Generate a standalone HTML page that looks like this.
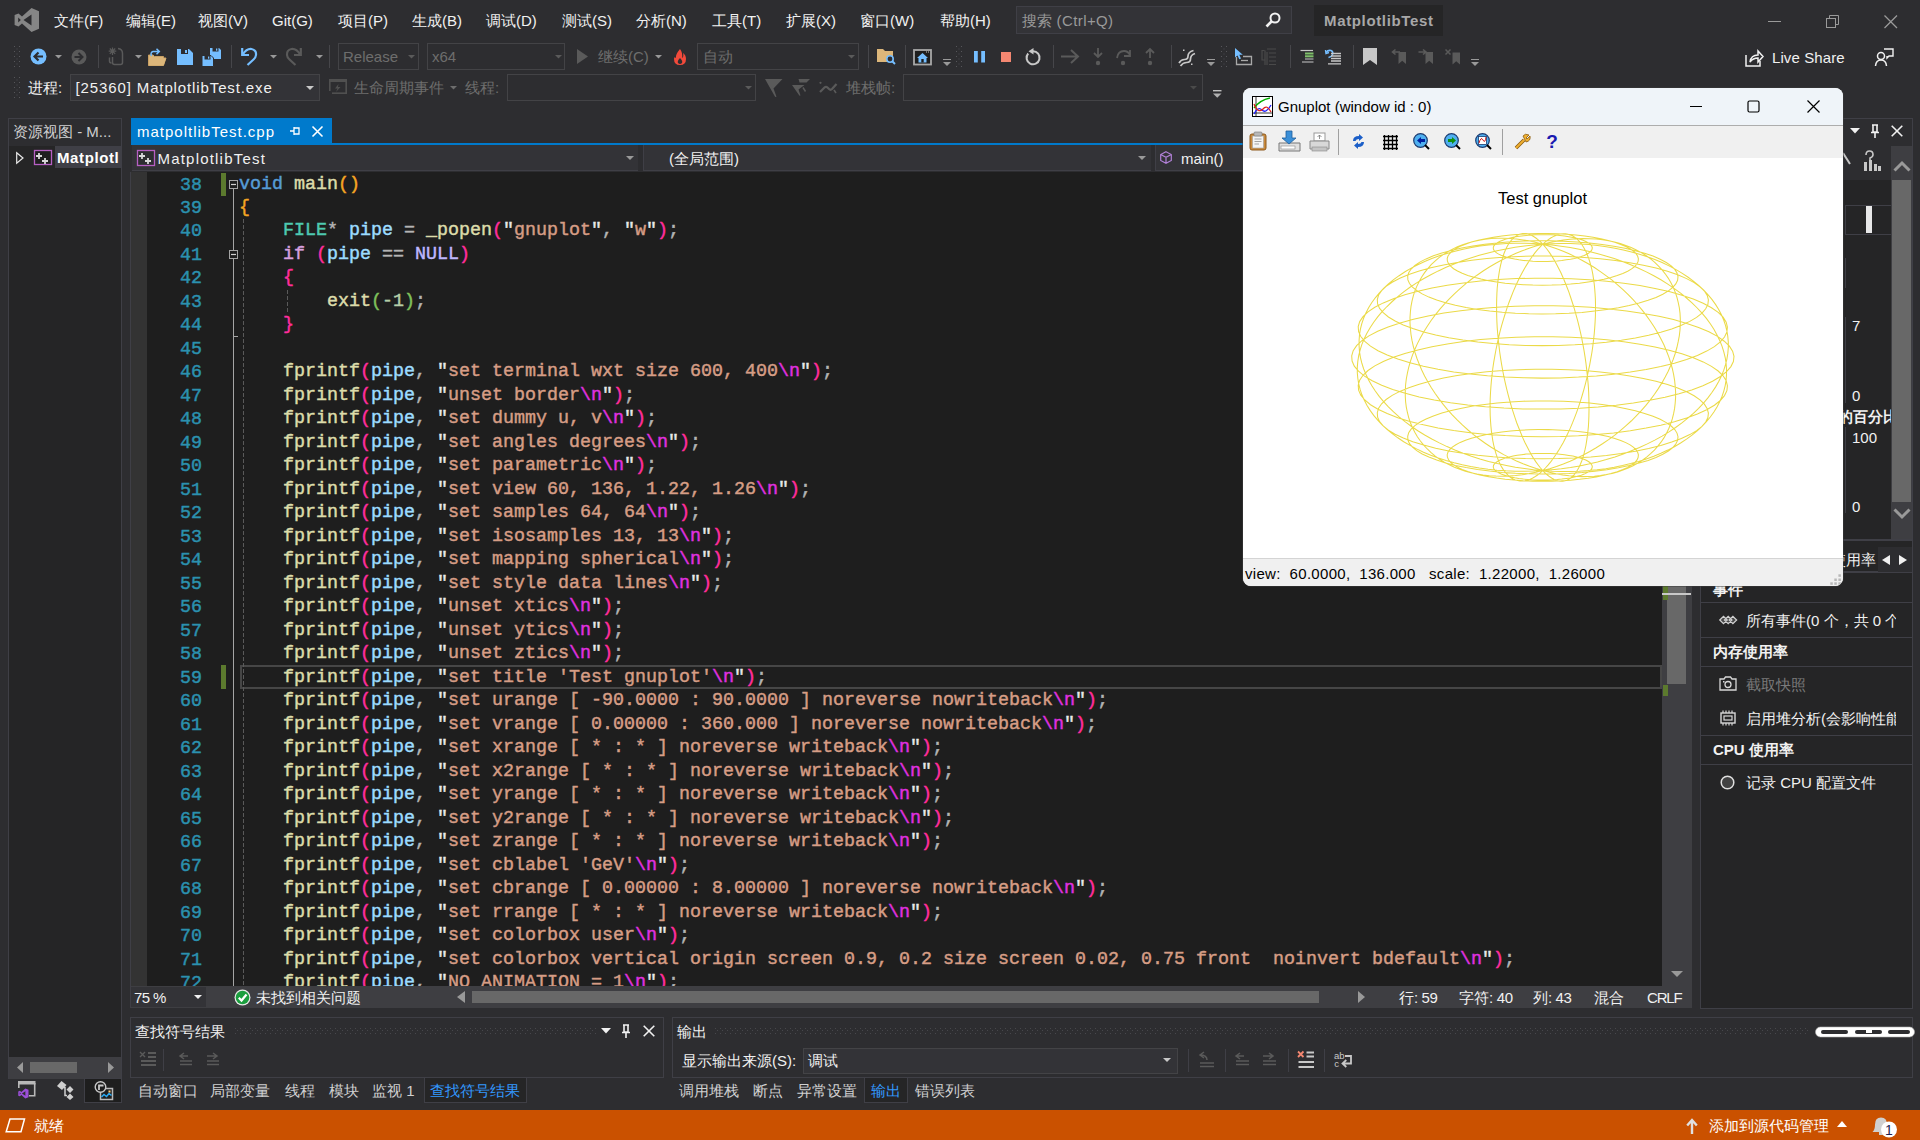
<!DOCTYPE html><html><head><meta charset="utf-8"><style>
html,body{margin:0;padding:0;width:1920px;height:1140px;overflow:hidden;background:#2D2D30;}
.a{position:absolute;}
.t{position:absolute;white-space:nowrap;}
svg.a{overflow:visible;}
.cj{display:inline-block;width:1em;text-align:center;letter-spacing:0;}
</style></head><body>
<svg class="a" style="left:14px;top:8px;" width="26" height="25" viewBox="0 0 26 25"><path d="M17.5 0 L25 3.2 L25 20.8 L17.5 24 L8 15.5 L4.5 18.5 L0.6 17 L0.6 7 L4.5 5.5 L8 8.5 Z M17.5 6.5 L9.5 12 L17.5 17.5 Z M4.2 9.5 L4.2 14.5 L6.8 12 Z" fill="#868686" fill-rule="evenodd"/></svg>
<div class="t" style="left:54px;top:10.5px;font-size:15px;line-height:20px;color:#F1F1F1;font-weight:normal;font-family:'Liberation Sans',sans-serif;"><span class="cj">文</span><span class="cj">件</span>(F)</div>
<div class="t" style="left:126px;top:10.5px;font-size:15px;line-height:20px;color:#F1F1F1;font-weight:normal;font-family:'Liberation Sans',sans-serif;"><span class="cj">编</span><span class="cj">辑</span>(E)</div>
<div class="t" style="left:198px;top:10.5px;font-size:15px;line-height:20px;color:#F1F1F1;font-weight:normal;font-family:'Liberation Sans',sans-serif;"><span class="cj">视</span><span class="cj">图</span>(V)</div>
<div class="t" style="left:272px;top:10.5px;font-size:15px;line-height:20px;color:#F1F1F1;font-weight:normal;font-family:'Liberation Sans',sans-serif;">Git(G)</div>
<div class="t" style="left:338px;top:10.5px;font-size:15px;line-height:20px;color:#F1F1F1;font-weight:normal;font-family:'Liberation Sans',sans-serif;"><span class="cj">项</span><span class="cj">目</span>(P)</div>
<div class="t" style="left:412px;top:10.5px;font-size:15px;line-height:20px;color:#F1F1F1;font-weight:normal;font-family:'Liberation Sans',sans-serif;"><span class="cj">生</span><span class="cj">成</span>(B)</div>
<div class="t" style="left:486px;top:10.5px;font-size:15px;line-height:20px;color:#F1F1F1;font-weight:normal;font-family:'Liberation Sans',sans-serif;"><span class="cj">调</span><span class="cj">试</span>(D)</div>
<div class="t" style="left:562px;top:10.5px;font-size:15px;line-height:20px;color:#F1F1F1;font-weight:normal;font-family:'Liberation Sans',sans-serif;"><span class="cj">测</span><span class="cj">试</span>(S)</div>
<div class="t" style="left:636px;top:10.5px;font-size:15px;line-height:20px;color:#F1F1F1;font-weight:normal;font-family:'Liberation Sans',sans-serif;"><span class="cj">分</span><span class="cj">析</span>(N)</div>
<div class="t" style="left:712px;top:10.5px;font-size:15px;line-height:20px;color:#F1F1F1;font-weight:normal;font-family:'Liberation Sans',sans-serif;"><span class="cj">工</span><span class="cj">具</span>(T)</div>
<div class="t" style="left:786px;top:10.5px;font-size:15px;line-height:20px;color:#F1F1F1;font-weight:normal;font-family:'Liberation Sans',sans-serif;"><span class="cj">扩</span><span class="cj">展</span>(X)</div>
<div class="t" style="left:860px;top:10.5px;font-size:15px;line-height:20px;color:#F1F1F1;font-weight:normal;font-family:'Liberation Sans',sans-serif;"><span class="cj">窗</span><span class="cj">口</span>(W)</div>
<div class="t" style="left:940px;top:10.5px;font-size:15px;line-height:20px;color:#F1F1F1;font-weight:normal;font-family:'Liberation Sans',sans-serif;"><span class="cj">帮</span><span class="cj">助</span>(H)</div>
<div class="a" style="left:1016px;top:6px;width:276px;height:28px;background:#333337;border:1px solid #3F3F46;box-sizing:border-box;"></div>
<div class="t" style="left:1022px;top:10.5px;font-size:15px;line-height:20px;color:#999999;font-weight:normal;font-family:'Liberation Sans',sans-serif;letter-spacing:0.4px;"><span class="cj">搜</span><span class="cj">索</span> (Ctrl+Q)</div>
<svg class="a" style="left:1265px;top:12px;" width="16" height="16" viewBox="0 0 16 16"><circle cx="10" cy="6" r="4.5" stroke="#F1F1F1" stroke-width="2" fill="none"/><path d="M7 9 L1.5 14.5" stroke="#F1F1F1" stroke-width="2.6"/></svg>
<div class="a" style="left:1314px;top:5px;width:129px;height:31px;background:#252526;"></div>
<div class="t" style="left:1324px;top:11.0px;font-size:15px;line-height:20px;color:#A8A8A8;font-weight:bold;font-family:'Liberation Sans',sans-serif;letter-spacing:0.65px;">MatplotlibTest</div>
<div class="a" style="left:1768px;top:21px;width:13px;height:1px;background:#9A9A9A;"></div>
<svg class="a" style="left:1826px;top:15px;" width="14" height="14" viewBox="0 0 14 14"><rect x="0.5" y="3.5" width="9" height="9" stroke="#9A9A9A" fill="none"/><path d="M3.5 3.5 V0.5 H12.5 V9.5 H9.5" stroke="#9A9A9A" fill="none"/></svg>
<svg class="a" style="left:1884px;top:15px;" width="14" height="14" viewBox="0 0 14 14"><path d="M0.5 0.5 L13 13 M13 0.5 L0.5 13" stroke="#9A9A9A" stroke-width="1.3"/></svg>
<svg class="a" style="left:14px;top:46px;" width="6" height="21" viewBox="0 0 6 21"><rect x="0" y="0" width="1" height="1" fill="#56565A"/><rect x="5" y="0" width="1" height="1" fill="#56565A"/><rect x="2.5" y="2.5" width="1" height="1" fill="#4E4E52"/><rect x="0" y="5" width="1" height="1" fill="#56565A"/><rect x="5" y="5" width="1" height="1" fill="#56565A"/><rect x="2.5" y="7.5" width="1" height="1" fill="#4E4E52"/><rect x="0" y="10" width="1" height="1" fill="#56565A"/><rect x="5" y="10" width="1" height="1" fill="#56565A"/><rect x="2.5" y="12.5" width="1" height="1" fill="#4E4E52"/><rect x="0" y="15" width="1" height="1" fill="#56565A"/><rect x="5" y="15" width="1" height="1" fill="#56565A"/><rect x="2.5" y="17.5" width="1" height="1" fill="#4E4E52"/><rect x="0" y="20" width="1" height="1" fill="#56565A"/><rect x="5" y="20" width="1" height="1" fill="#56565A"/></svg>
<svg class="a" style="left:30px;top:48px;" width="17" height="17" viewBox="0 0 17 17"><circle cx="8.5" cy="8.5" r="8" fill="#75BEFF"/><path d="M13 8.5 H5 M8.5 4.5 L4.5 8.5 L8.5 12.5" stroke="#2D2D30" stroke-width="2.2" fill="none"/></svg>
<svg class="a" style="left:55px;top:54.5px;" width="7" height="5" viewBox="0 0 7 5"><path d="M0 0 L7 0 L3.5 3.5 Z" fill="#999999"/></svg>
<svg class="a" style="left:71px;top:49px;" width="16" height="16" viewBox="0 0 16 16"><circle cx="8" cy="8" r="7.5" fill="#5A5A5A"/><path d="M3.5 8 H11 M7.5 4 L11.5 8 L7.5 12" stroke="#2D2D30" stroke-width="2" fill="none"/></svg>
<div class="a" style="left:98px;top:45px;width:1px;height:23px;background:#46464A;"></div>
<svg class="a" style="left:107px;top:47px;" width="19" height="19" viewBox="0 0 19 19"><path d="M5.5 0.5 V8 M1.7 4.2 H9.3 M2.8 1.5 L8.2 6.9 M8.2 1.5 L2.8 6.9" stroke="#5A5A5A" stroke-width="1.2"/><path d="M2.5 10.5 V14 Q2.5 16 4.5 16" stroke="#5A5A5A" stroke-width="1.5" fill="none"/><path d="M5.5 10 V15.5 Q5.5 17.5 7.5 17.5 H13.5 Q15.5 17.5 15.5 15.5 V6.5 Q15.5 2 11 1.5" stroke="#5A5A5A" stroke-width="1.5" fill="none"/></svg>
<svg class="a" style="left:135px;top:54.5px;" width="7" height="5" viewBox="0 0 7 5"><path d="M0 0 L7 0 L3.5 3.5 Z" fill="#999999"/></svg>
<svg class="a" style="left:148px;top:48px;" width="19" height="18" viewBox="0 0 19 18"><path d="M0.5 7 H5 L6.5 8.5 H15.5 V10 H18 L15.5 17.5 H0.5 Z" fill="#DCB67A" stroke="#C9A063" stroke-width="1"/><path d="M3 10.5 H18 L15.5 17.5 H0.5 Z" fill="#DCB67A"/><path d="M3.5 8 Q2 4.5 5 3.5 H11 M8.5 0.8 L11.3 3.5 L8.5 6.2" stroke="#75BEFF" stroke-width="1.5" fill="none"/></svg>
<svg class="a" style="left:177px;top:49px;" width="16" height="16" viewBox="0 0 16 16"><path d="M0 0 H12 L16 4 V16 H0 Z" fill="#75BEFF"/><rect x="4" y="0" width="7" height="5" fill="#2D2D30"/><rect x="8" y="1" width="2" height="3" fill="#75BEFF"/><rect x="3" y="9" width="10" height="7" fill="#75BEFF"/></svg>
<svg class="a" style="left:202px;top:47px;" width="20" height="20" viewBox="0 0 20 20"><path d="M8 1 H17 L19 3 V12 H8 Z" fill="#75BEFF"/><rect x="10.5" y="1" width="6" height="3.5" fill="#2D2D30"/><rect x="14" y="1.5" width="1.3" height="2.2" fill="#75BEFF"/><path d="M0 8.5 H9 L11.5 11 V19.5 H0 Z" fill="#75BEFF" stroke="#2D2D30" stroke-width="1"/><rect x="2.5" y="9" width="6" height="3.5" fill="#2D2D30"/><rect x="6" y="9.5" width="1.3" height="2.2" fill="#75BEFF"/></svg>
<div class="a" style="left:231px;top:45px;width:1px;height:23px;background:#46464A;"></div>
<svg class="a" style="left:240px;top:46.5px;" width="18" height="19" viewBox="0 0 18 19"><path d="M2.2 1 V8 H9" stroke="#75BEFF" stroke-width="2.2" fill="none"/><path d="M2.8 7.5 Q6.5 1.5 11.5 2 Q16.5 3 16 8 Q15.8 10.5 13.5 12.5 L7.5 18" stroke="#75BEFF" stroke-width="2.2" fill="none"/></svg>
<svg class="a" style="left:270px;top:54.5px;" width="7" height="5" viewBox="0 0 7 5"><path d="M0 0 L7 0 L3.5 3.5 Z" fill="#999999"/></svg>
<svg class="a" style="left:285px;top:46.5px;" width="18" height="19" viewBox="0 0 18 19"><path d="M15.8 1 V8 H9" stroke="#5A5A5A" stroke-width="2.2" fill="none"/><path d="M15.2 7.5 Q11.5 1.5 6.5 2 Q1.5 3 2 8 Q2.2 10.5 4.5 12.5 L10.5 18" stroke="#5A5A5A" stroke-width="2.2" fill="none"/></svg>
<svg class="a" style="left:316px;top:54.5px;" width="7" height="5" viewBox="0 0 7 5"><path d="M0 0 L7 0 L3.5 3.5 Z" fill="#999999"/></svg>
<div class="a" style="left:329px;top:45px;width:1px;height:23px;background:#46464A;"></div>
<div class="a" style="left:338px;top:43px;width:81px;height:27px;background:#2D2D30;border:1px solid #434346;box-sizing:border-box;"></div>
<div class="t" style="left:343px;top:46.5px;font-size:15px;line-height:20px;color:#6D6D6D;font-weight:normal;font-family:'Liberation Sans',sans-serif;">Release</div>
<svg class="a" style="left:408px;top:54.5px;" width="7" height="5" viewBox="0 0 7 5"><path d="M0 0 L7 0 L3.5 3.5 Z" fill="#5A5A5A"/></svg>
<div class="a" style="left:427px;top:43px;width:138px;height:27px;background:#2D2D30;border:1px solid #434346;box-sizing:border-box;"></div>
<div class="t" style="left:432px;top:46.5px;font-size:15px;line-height:20px;color:#6D6D6D;font-weight:normal;font-family:'Liberation Sans',sans-serif;">x64</div>
<svg class="a" style="left:555px;top:54.5px;" width="7" height="5" viewBox="0 0 7 5"><path d="M0 0 L7 0 L3.5 3.5 Z" fill="#5A5A5A"/></svg>
<svg class="a" style="left:577px;top:49px;" width="12" height="15" viewBox="0 0 12 15"><path d="M0 0 L11 7.5 L0 15 Z" fill="#5A5A5A"/></svg>
<div class="t" style="left:598px;top:46.5px;font-size:15px;line-height:20px;color:#6D6D6D;font-weight:normal;font-family:'Liberation Sans',sans-serif;"><span class="cj">继</span><span class="cj">续</span>(C)</div>
<svg class="a" style="left:655px;top:54.5px;" width="7" height="5" viewBox="0 0 7 5"><path d="M0 0 L7 0 L3.5 3.5 Z" fill="#999999"/></svg>
<svg class="a" style="left:673px;top:49px;" width="14" height="16" viewBox="0 0 14 16"><path d="M7 0 Q2 6 3 9 Q1 7 1 10 Q1 16 7 16 Q13 16 13 10 Q13 6 10 4 Q11 8 9 9 Q10 4 7 0 Z" fill="#F14A3B"/><path d="M7 9 Q4 12 5 14 Q7 16 9 14 Q10 12 7 9Z" fill="#2D2D30"/></svg>
<div class="a" style="left:697px;top:43px;width:162px;height:27px;background:#2D2D30;border:1px solid #434346;box-sizing:border-box;"></div>
<div class="t" style="left:703px;top:46.5px;font-size:15px;line-height:20px;color:#6D6D6D;font-weight:normal;font-family:'Liberation Sans',sans-serif;"><span class="cj">自</span><span class="cj">动</span></div>
<svg class="a" style="left:848px;top:54.5px;" width="7" height="5" viewBox="0 0 7 5"><path d="M0 0 L7 0 L3.5 3.5 Z" fill="#5A5A5A"/></svg>
<div class="a" style="left:868px;top:45px;width:1px;height:23px;background:#46464A;"></div>
<svg class="a" style="left:877px;top:48px;" width="19" height="17" viewBox="0 0 19 17"><path d="M0 1 H6 L8 3 H16 V14 H0 Z" fill="#DCB67A"/><circle cx="13" cy="11" r="3.2" stroke="#75BEFF" stroke-width="1.6" fill="#2D2D30"/><path d="M15 13 L18 16" stroke="#75BEFF" stroke-width="2"/></svg>
<div class="a" style="left:905px;top:45px;width:1px;height:23px;background:#46464A;"></div>
<svg class="a" style="left:913px;top:48.5px;" width="19" height="17" viewBox="0 0 19 17"><rect x="1" y="1" width="17" height="14.5" stroke="#A8A8A8" stroke-width="1.8" fill="#1E1E1E"/><path d="M4 9 L9.5 4 L15 9 H13.5 V13.5 H5.5 V9 Z" fill="#75BEFF"/><rect x="8.3" y="10" width="2.4" height="3.5" fill="#1E1E1E"/><rect x="13" y="2.5" width="1" height="1" fill="#C8C8C8"/><rect x="15" y="2.5" width="1" height="1" fill="#C8C8C8"/></svg>
<svg class="a" style="left:943px;top:59px;" width="8" height="9" viewBox="0 0 8 9"><rect x="0" y="0" width="8" height="1" fill="#999"/><path d="M0 3 H8 L4 7 Z" fill="#999"/></svg>
<svg class="a" style="left:956px;top:46px;" width="6" height="21" viewBox="0 0 6 21"><rect x="0" y="0" width="1" height="1" fill="#56565A"/><rect x="5" y="0" width="1" height="1" fill="#56565A"/><rect x="2.5" y="2.5" width="1" height="1" fill="#4E4E52"/><rect x="0" y="5" width="1" height="1" fill="#56565A"/><rect x="5" y="5" width="1" height="1" fill="#56565A"/><rect x="2.5" y="7.5" width="1" height="1" fill="#4E4E52"/><rect x="0" y="10" width="1" height="1" fill="#56565A"/><rect x="5" y="10" width="1" height="1" fill="#56565A"/><rect x="2.5" y="12.5" width="1" height="1" fill="#4E4E52"/><rect x="0" y="15" width="1" height="1" fill="#56565A"/><rect x="5" y="15" width="1" height="1" fill="#56565A"/><rect x="2.5" y="17.5" width="1" height="1" fill="#4E4E52"/><rect x="0" y="20" width="1" height="1" fill="#56565A"/><rect x="5" y="20" width="1" height="1" fill="#56565A"/></svg>
<svg class="a" style="left:973.5px;top:50.5px;" width="11" height="12" viewBox="0 0 11 12"><rect x="0" y="0" width="3.8" height="11.5" fill="#75BEFF"/><rect x="7.2" y="0" width="3.8" height="11.5" fill="#75BEFF"/></svg>
<div class="a" style="left:1000.5px;top:52px;width:10.5px;height:10px;background:#F48771;"></div>
<svg class="a" style="left:1024px;top:48px;" width="18" height="18" viewBox="0 0 18 18"><path d="M4.2 5.5 A6.5 6.5 0 1 0 9 3.3" stroke="#C8C8C8" stroke-width="2" fill="none"/><path d="M9.5 0 L9.5 6.5 L4.5 3.2 Z" fill="#C8C8C8"/></svg>
<div class="a" style="left:1053px;top:45px;width:1px;height:23px;background:#46464A;"></div>
<svg class="a" style="left:1061px;top:49px;" width="19" height="15" viewBox="0 0 19 15"><path d="M0 7.5 H17 M10 1 L17 7.5 L10 14" stroke="#5A5A5A" stroke-width="2" fill="none"/></svg>
<svg class="a" style="left:1093px;top:48px;" width="10" height="18" viewBox="0 0 10 18"><path d="M5 0 V9 M1 5 L5 9 L9 5" stroke="#5A5A5A" stroke-width="1.8" fill="none"/><circle cx="5" cy="15" r="2.2" fill="#5A5A5A"/></svg>
<svg class="a" style="left:1115px;top:48px;" width="17" height="18" viewBox="0 0 17 18"><path d="M2 10 Q3 3 9 3 Q13 3 15 7 M15 2 V8 H9" stroke="#5A5A5A" stroke-width="1.8" fill="none"/><circle cx="8" cy="15" r="2.2" fill="#5A5A5A"/></svg>
<svg class="a" style="left:1145px;top:48px;" width="10" height="18" viewBox="0 0 10 18"><path d="M5 10 V1 M1 5 L5 1 L9 5" stroke="#5A5A5A" stroke-width="1.8" fill="none"/><circle cx="5" cy="15" r="2.2" fill="#5A5A5A"/></svg>
<div class="a" style="left:1171px;top:45px;width:1px;height:23px;background:#46464A;"></div>
<svg class="a" style="left:1178px;top:48.5px;" width="18" height="18" viewBox="0 0 18 18"><path d="M1 14 Q3 10.5 6.5 10.5 Q10 10.5 10 7 Q10 3 15.5 1.5" stroke="#C8C8C8" stroke-width="1.7" fill="none"/><path d="M2.5 17 Q5 13.5 8.5 13.5 Q12.5 13.5 12.5 10 Q12.5 6 17 4.5" stroke="#C8C8C8" stroke-width="1.7" fill="none"/><rect x="5" y="0.5" width="1.5" height="1.5" fill="#C8C8C8"/><rect x="13" y="14.5" width="1.5" height="1.5" fill="#C8C8C8"/></svg>
<svg class="a" style="left:1207px;top:59px;" width="8" height="9" viewBox="0 0 8 9"><rect x="0" y="0" width="8" height="1" fill="#999"/><path d="M0 3 H8 L4 7 Z" fill="#999"/></svg>
<svg class="a" style="left:1221px;top:46px;" width="6" height="21" viewBox="0 0 6 21"><rect x="0" y="0" width="1" height="1" fill="#56565A"/><rect x="5" y="0" width="1" height="1" fill="#56565A"/><rect x="2.5" y="2.5" width="1" height="1" fill="#4E4E52"/><rect x="0" y="5" width="1" height="1" fill="#56565A"/><rect x="5" y="5" width="1" height="1" fill="#56565A"/><rect x="2.5" y="7.5" width="1" height="1" fill="#4E4E52"/><rect x="0" y="10" width="1" height="1" fill="#56565A"/><rect x="5" y="10" width="1" height="1" fill="#56565A"/><rect x="2.5" y="12.5" width="1" height="1" fill="#4E4E52"/><rect x="0" y="15" width="1" height="1" fill="#56565A"/><rect x="5" y="15" width="1" height="1" fill="#56565A"/><rect x="2.5" y="17.5" width="1" height="1" fill="#4E4E52"/><rect x="0" y="20" width="1" height="1" fill="#56565A"/><rect x="5" y="20" width="1" height="1" fill="#56565A"/></svg>
<svg class="a" style="left:1235px;top:48px;" width="18" height="18" viewBox="0 0 18 18"><path d="M1.5 9 V16.5 H16.5 V8.5 H8" stroke="#A8A8A8" stroke-width="1.3" fill="none"/><path d="M6 12.5 H13" stroke="#A8A8A8" stroke-width="1.3"/><path d="M0 0 L0 9.5 L2.5 7.5 L4.3 11.3 L6 10.5 L4.3 6.8 L7.8 6.8 Z" fill="#75BEFF"/></svg>
<svg class="a" style="left:1261px;top:48px;" width="18" height="18" viewBox="0 0 18 18"><path d="M3.5 2.5 H1 V12 H3.5 M4 2.5 V17 M6 1 H15 M6 4 V17 M8 5 H15 M8 9 H15 M8 13 H15 M8 16.5 H15" stroke="#4A4A4A" stroke-width="1.2" fill="none"/></svg>
<div class="a" style="left:1290px;top:45px;width:1px;height:23px;background:#46464A;"></div>
<svg class="a" style="left:1300px;top:49px;" width="15" height="15" viewBox="0 0 15 15"><path d="M0.5 1.5 H13" stroke="#C8C8C8" stroke-width="1.2"/><rect x="5" y="3.5" width="8.5" height="2" fill="#7FBF6A"/><rect x="5" y="6.3" width="8.5" height="2" fill="#7FBF6A"/><path d="M5 10 H13.5 M2 13 H13.5" stroke="#C8C8C8" stroke-width="1.2"/></svg>
<svg class="a" style="left:1325px;top:48.5px;" width="17" height="16" viewBox="0 0 17 16"><path d="M1 3.5 Q3 0.8 6 1.5 Q8.5 2.5 7.5 5.5 Q6.5 8 3.5 8.5" stroke="#75BEFF" stroke-width="1.6" fill="none"/><path d="M0.5 1 L1 4.5 L4 3.5" stroke="#75BEFF" stroke-width="1.4" fill="none"/><path d="M6 4.5 H16 M6 7 H16 M6 9.5 H16 M6 12 H16 M3 14.8 H16" stroke="#C8C8C8" stroke-width="1.3"/></svg>
<div class="a" style="left:1353px;top:45px;width:1px;height:23px;background:#46464A;"></div>
<svg class="a" style="left:1363px;top:48px;" width="14" height="17" viewBox="0 0 14 17"><path d="M0 0 H14 V17 L7 12 L0 17 Z" fill="#C8C8C8"/></svg>
<svg class="a" style="left:1391px;top:48.5px;" width="16" height="16" viewBox="0 0 16 16"><path d="M7.5 3 H15 V15 L11.2 11.8 L7.5 15 Z" fill="#5A5A5A"/><path d="M9 3 H1.5 M4.5 0.5 L1.5 3 L4.5 5.5" stroke="#5A5A5A" stroke-width="1.6" fill="none"/></svg>
<svg class="a" style="left:1418px;top:48.5px;" width="16" height="16" viewBox="0 0 16 16"><path d="M7.5 3 H15 V15 L11.2 11.8 L7.5 15 Z" fill="#5A5A5A"/><path d="M0.5 3 H8 M5 0.5 L8 3 L5 5.5" stroke="#5A5A5A" stroke-width="1.6" fill="none"/></svg>
<svg class="a" style="left:1445px;top:48.5px;" width="16" height="16" viewBox="0 0 16 16"><path d="M7.5 3.5 H15 V15.5 L11.2 12.3 L7.5 15.5 Z" fill="#5A5A5A"/><path d="M0.5 0.5 L5.5 5.5 M5.5 0.5 L0.5 5.5" stroke="#5A5A5A" stroke-width="1.5" fill="none"/></svg>
<svg class="a" style="left:1471px;top:59px;" width="8" height="9" viewBox="0 0 8 9"><rect x="0" y="0" width="8" height="1" fill="#999"/><path d="M0 3 H8 L4 7 Z" fill="#999"/></svg>
<svg class="a" style="left:1745px;top:49px;" width="19" height="18" viewBox="0 0 19 18"><path d="M1 6 V17 H15 V12" stroke="#F1F1F1" stroke-width="1.5" fill="none"/><path d="M5 13 Q6 6 13 6 V2 L18 7.5 L13 13 V9 Q8 9 5 13 Z" stroke="#F1F1F1" stroke-width="1.5" fill="none"/></svg>
<div class="t" style="left:1772px;top:48.0px;font-size:15px;line-height:20px;color:#F1F1F1;font-weight:normal;font-family:'Liberation Sans',sans-serif;letter-spacing:0.1px;">Live Share</div>
<svg class="a" style="left:1875px;top:48px;" width="19" height="19" viewBox="0 0 19 19"><circle cx="6" cy="8" r="3.5" stroke="#F1F1F1" stroke-width="1.5" fill="none"/><path d="M0.5 18 Q1 12 6 12 Q11 12 11.5 18" stroke="#F1F1F1" stroke-width="1.5" fill="none"/><path d="M9 1 H18 V8 H14 L12 10 V8" stroke="#F1F1F1" stroke-width="1.4" fill="none"/></svg>
<svg class="a" style="left:14px;top:77px;" width="6" height="21" viewBox="0 0 6 21"><rect x="0" y="0" width="1" height="1" fill="#56565A"/><rect x="5" y="0" width="1" height="1" fill="#56565A"/><rect x="2.5" y="2.5" width="1" height="1" fill="#4E4E52"/><rect x="0" y="5" width="1" height="1" fill="#56565A"/><rect x="5" y="5" width="1" height="1" fill="#56565A"/><rect x="2.5" y="7.5" width="1" height="1" fill="#4E4E52"/><rect x="0" y="10" width="1" height="1" fill="#56565A"/><rect x="5" y="10" width="1" height="1" fill="#56565A"/><rect x="2.5" y="12.5" width="1" height="1" fill="#4E4E52"/><rect x="0" y="15" width="1" height="1" fill="#56565A"/><rect x="5" y="15" width="1" height="1" fill="#56565A"/><rect x="2.5" y="17.5" width="1" height="1" fill="#4E4E52"/><rect x="0" y="20" width="1" height="1" fill="#56565A"/><rect x="5" y="20" width="1" height="1" fill="#56565A"/></svg>
<div class="t" style="left:28px;top:77.5px;font-size:15px;line-height:20px;color:#F1F1F1;font-weight:normal;font-family:'Liberation Sans',sans-serif;"><span class="cj">进</span><span class="cj">程</span>:</div>
<div class="a" style="left:70px;top:74px;width:250px;height:27px;background:#333337;border:1px solid #434346;box-sizing:border-box;"></div>
<div class="t" style="left:75.5px;top:77.5px;font-size:15px;line-height:20px;color:#F1F1F1;font-weight:normal;font-family:'Liberation Sans',sans-serif;letter-spacing:0.88px;">[25360] MatplotlibTest.exe</div>
<svg class="a" style="left:306px;top:85.5px;" width="8" height="5" viewBox="0 0 8 5"><path d="M0 0 L8 0 L4.0 4.0 Z" fill="#C8C8C8"/></svg>
<svg class="a" style="left:329px;top:79px;" width="18" height="15" viewBox="0 0 18 15"><rect x="0.8" y="0.8" width="16.4" height="13.4" stroke="#505050" stroke-width="1.6" fill="none"/><rect x="0" y="0" width="18" height="3" fill="#505050"/><path d="M9.5 5 L6 9.5 H8.5 L7 13 L11.5 8 H9 Z" fill="#505050"/><rect x="0" y="12" width="3" height="3" fill="#2D2D30"/></svg>
<div class="t" style="left:354px;top:77.5px;font-size:15px;line-height:20px;color:#6D6D6D;font-weight:normal;font-family:'Liberation Sans',sans-serif;"><span class="cj">生</span><span class="cj">命</span><span class="cj">周</span><span class="cj">期</span><span class="cj">事</span><span class="cj">件</span></div>
<svg class="a" style="left:450px;top:85.5px;" width="7" height="5" viewBox="0 0 7 5"><path d="M0 0 L7 0 L3.5 3.5 Z" fill="#6D6D6D"/></svg>
<div class="t" style="left:465px;top:77.5px;font-size:15px;line-height:20px;color:#6D6D6D;font-weight:normal;font-family:'Liberation Sans',sans-serif;"><span class="cj">线</span><span class="cj">程</span>:</div>
<div class="a" style="left:507px;top:74px;width:249px;height:27px;background:#2D2D30;border:1px solid #434346;box-sizing:border-box;"></div>
<svg class="a" style="left:745px;top:85.5px;" width="7" height="5" viewBox="0 0 7 5"><path d="M0 0 L7 0 L3.5 3.5 Z" fill="#5A5A5A"/></svg>
<svg class="a" style="left:765px;top:79px;" width="18" height="19" viewBox="0 0 18 19"><path d="M0 0 H17.5 L8.5 9.5 L11.5 17.8 L10.2 18 Z" fill="#5A5A5A"/></svg>
<svg class="a" style="left:792px;top:79px;" width="19" height="18" viewBox="0 0 19 18"><path d="M6.5 0 H18 L14.5 3.5 H7.5 Z" fill="#5A5A5A"/><path d="M0 6 H12.5 L6.5 10.5 L8.5 16.5 L7.5 16.8 Z" fill="#5A5A5A"/><path d="M11 8.5 L13.5 12.5" stroke="#5A5A5A" stroke-width="1.5"/></svg>
<svg class="a" style="left:819px;top:81px;" width="19" height="13" viewBox="0 0 19 13"><path d="M1 11 L5.5 6.5 Q7 5 8.5 6.5 L10 8 Q11.5 9.5 13 8 L17.5 3" stroke="#5A5A5A" stroke-width="2.2" fill="none"/><circle cx="1.5" cy="1.8" r="1.1" fill="#5A5A5A"/><path d="M15 9 L17 12" stroke="#5A5A5A" stroke-width="1.6"/></svg>
<div class="t" style="left:846px;top:77.5px;font-size:15px;line-height:20px;color:#6D6D6D;font-weight:normal;font-family:'Liberation Sans',sans-serif;"><span class="cj">堆</span><span class="cj">栈</span><span class="cj">帧</span>:</div>
<div class="a" style="left:903px;top:74px;width:300px;height:27px;background:#2D2D30;border:1px solid #434346;box-sizing:border-box;"></div>
<svg class="a" style="left:1190px;top:85.5px;" width="7" height="5" viewBox="0 0 7 5"><path d="M0 0 L7 0 L3.5 3.5 Z" fill="#4A4A4A"/></svg>
<svg class="a" style="left:1213px;top:90px;" width="8.5" height="9" viewBox="0 0 8.5 9"><rect x="0" y="0" width="8.5" height="1.4" fill="#C0C0C0"/><path d="M0 3.6 H8.5 L4.25 7.8 Z" fill="#B0B0B0"/></svg>
<div class="a" style="left:8px;top:118px;width:114px;height:28px;background:#2D2D30;border:1px solid #3F3F46;box-sizing:border-box;border-bottom:none;"></div>
<div class="t" style="left:13px;top:121.5px;font-size:15px;line-height:20px;color:#D0D0D0;font-weight:normal;font-family:'Liberation Sans',sans-serif;"><span class="cj">资</span><span class="cj">源</span><span class="cj">视</span><span class="cj">图</span> - M...</div>
<div class="a" style="left:8px;top:146px;width:114px;height:911px;background:#252526;border:1px solid #3F3F46;box-sizing:border-box;border-top:none;border-bottom:none;"></div>
<div class="a" style="left:55px;top:146px;width:66px;height:22px;background:#3F3F46;"></div>
<svg class="a" style="left:16px;top:152px;" width="8" height="12" viewBox="0 0 8 12"><path d="M0.7 0.7 L7 6 L0.7 11.3 Z" stroke="#E8E8E8" stroke-width="1.2" fill="none"/></svg>
<svg class="a" style="left:34px;top:150px;" width="18" height="15" viewBox="0 0 18 15"><rect x="0.5" y="0.5" width="17" height="14" stroke="#B65FC3" stroke-width="1.3" fill="#1E1E1E"/><path d="M5 3 V9 M2 6 H8 M11 8 V14 M8 11 H14" stroke="#D8D8D8" stroke-width="1.8"/></svg>
<div class="t" style="left:57px;top:147.5px;font-size:15px;line-height:20px;color:#FFFFFF;font-weight:bold;font-family:'Liberation Sans',sans-serif;letter-spacing:0.6px;width:64px;overflow:hidden;">Matplotl</div>
<div class="a" style="left:8px;top:1057px;width:114px;height:22px;background:#3E3E42;border:1px solid #3F3F46;box-sizing:border-box;border-top:none;border-bottom:none;"></div>
<svg class="a" style="left:17px;top:1062px;" width="6" height="11" viewBox="0 0 6 11"><path d="M6 0 L0 5.5 L6 11 Z" fill="#999999"/></svg>
<div class="a" style="left:30px;top:1062px;width:47px;height:11px;background:#686868;"></div>
<svg class="a" style="left:108px;top:1062px;" width="6" height="11" viewBox="0 0 6 11"><path d="M0 0 L6 5.5 L0 11 Z" fill="#999999"/></svg>
<div class="a" style="left:84px;top:1078px;width:38px;height:25px;background:#1E1E1E;border:1px solid #3F3F46;box-sizing:border-box;"></div>
<svg class="a" style="left:17px;top:1080px;" width="20" height="20" viewBox="0 0 20 20"><rect x="1" y="1" width="17.5" height="3.5" fill="#B8B8B8"/><path d="M1.8 3 V8 M17.7 3 V15.7 H12" stroke="#B8B8B8" stroke-width="1.6" fill="none"/><g transform="translate(1,8.5) scale(0.42)"><path d="M17.5 0 L25 3.2 L25 20.8 L17.5 24 L8 15.5 L4.5 18.5 L0.6 17 L0.6 7 L4.5 5.5 L8 8.5 Z M17.5 6.5 L9.5 12 L17.5 17.5 Z M4.2 9.5 L4.2 14.5 L6.8 12 Z" fill="#9B4FD8" fill-rule="evenodd"/></g></svg>
<svg class="a" style="left:55px;top:1080px;" width="20" height="20" viewBox="0 0 20 20"><path d="M6.5 1 L11.5 5 L7 10 L2 6 Z" fill="#D0D0D0"/><path d="M15 6 L18.5 9.5 L15 13 L11.5 9.5 Z M15 13.5 L18.5 17 L15 20 L11.5 17 Z" fill="#D0D0D0"/><path d="M8.5 7.5 H10 V15.5 H12" stroke="#D0D0D0" stroke-width="1.5" fill="none"/></svg>
<svg class="a" style="left:94px;top:1080px;" width="20" height="20" viewBox="0 0 20 20"><rect x="6.5" y="8.5" width="12" height="11" stroke="#B8B8B8" stroke-width="1.5" fill="#1E1E1E"/><path d="M7.5 17 L10 14.5 L12.5 16.5 L15 13.5 L17.5 15.5" stroke="#2AA8F0" stroke-width="1.6" fill="none"/><rect x="14.5" y="10.5" width="2" height="2" fill="#FFD080"/><circle cx="6.5" cy="7" r="5.3" stroke="#C8C8C8" stroke-width="1.4" fill="#1E1E1E"/><path d="M5 10 V5.5 H9.5" stroke="#C8C8C8" stroke-width="1.8" fill="none"/></svg>
<div class="a" style="left:131px;top:118px;width:201px;height:27px;background:#007ACC;"></div>
<div class="t" style="left:137px;top:121.5px;font-size:15px;line-height:20px;color:#FFFFFF;font-weight:normal;font-family:'Liberation Sans',sans-serif;letter-spacing:1.0px;">matpoltlibTest.cpp</div>
<svg class="a" style="left:290px;top:126px;" width="10" height="10" viewBox="0 0 10 10"><path d="M0 5 H4 M4 1 V9 M4 2 H9 V8 H4" stroke="#FFFFFF" stroke-width="1.3" fill="none"/></svg>
<svg class="a" style="left:312px;top:126px;" width="11" height="11" viewBox="0 0 11 11"><path d="M0.5 0.5 L10.5 10.5 M10.5 0.5 L0.5 10.5" stroke="#FFFFFF" stroke-width="1.6"/></svg>
<div class="a" style="left:131px;top:143px;width:1561px;height:2px;background:#007ACC;"></div>
<div class="a" style="left:131px;top:145px;width:1561px;height:27px;background:#2D2D30;"></div>
<div class="a" style="left:132px;top:145px;width:506px;height:26px;background:#333337;border-bottom:1px solid #3F3F46;box-sizing:border-box;"></div>
<svg class="a" style="left:137px;top:150px;" width="18" height="16" viewBox="0 0 18 16"><rect x="0.5" y="0.5" width="17" height="15" stroke="#B65FC3" stroke-width="1.3" fill="#2D2D30"/><path d="M5 3 V9 M2 6 H8 M11 8 V14 M8 11 H14" stroke="#D8D8D8" stroke-width="1.8"/></svg>
<div class="t" style="left:157.5px;top:148.5px;font-size:15px;line-height:20px;color:#F1F1F1;font-weight:normal;font-family:'Liberation Sans',sans-serif;letter-spacing:1.2px;">MatplotlibTest</div>
<svg class="a" style="left:626px;top:156px;" width="8" height="5" viewBox="0 0 8 5"><path d="M0 0 L8 0 L4.0 4.0 Z" fill="#999999"/></svg>
<div class="a" style="left:643px;top:145px;width:508px;height:26px;background:#333337;border-left:1px solid #3F3F46;border-bottom:1px solid #3F3F46;box-sizing:border-box;"></div>
<div class="t" style="left:669px;top:148.5px;font-size:15px;line-height:20px;color:#F1F1F1;font-weight:normal;font-family:'Liberation Sans',sans-serif;">(<span class="cj">全</span><span class="cj">局</span><span class="cj">范</span><span class="cj">围</span>)</div>
<svg class="a" style="left:1138px;top:156px;" width="8" height="5" viewBox="0 0 8 5"><path d="M0 0 L8 0 L4.0 4.0 Z" fill="#999999"/></svg>
<div class="a" style="left:1155px;top:145px;width:537px;height:26px;background:#333337;border-left:1px solid #3F3F46;border-bottom:1px solid #3F3F46;box-sizing:border-box;"></div>
<svg class="a" style="left:1160px;top:151px;" width="12" height="13" viewBox="0 0 12 13"><path d="M6 0.7 L11.3 3.5 V9.5 L6 12.3 L0.7 9.5 V3.5 Z M0.7 3.5 L6 6.3 L11.3 3.5 M6 6.3 V12.3" stroke="#B180D7" stroke-width="1.2" fill="none"/></svg>
<div class="t" style="left:1181px;top:148.5px;font-size:15px;line-height:20px;color:#F1F1F1;font-weight:normal;font-family:'Liberation Sans',sans-serif;">main()</div>
<div class="a" style="left:131px;top:172px;width:1531px;height:815px;background:#1E1E1E;"></div>
<div class="a" style="left:131px;top:172px;width:16px;height:815px;background:#333333;"></div>
<div class="a" style="left:240px;top:665px;width:1422px;height:24px;background:none;border:2px solid #464646;box-sizing:border-box;"></div>
<div class="a" style="left:221px;top:173px;width:5px;height:23px;background:#5C7A2E;"></div>
<div class="a" style="left:221px;top:665px;width:5px;height:24px;background:#5C7A2E;"></div>
<div class="a" style="left:233px;top:189px;width:1px;height:797px;background:#A5A5A5;"></div>
<div class="a" style="left:233px;top:336px;width:5px;height:1px;background:#A5A5A5;"></div>
<svg class="a" style="left:229px;top:180px;" width="9" height="9" viewBox="0 0 9 9"><rect x="0.5" y="0.5" width="8" height="8" stroke="#A5A5A5" fill="#1E1E1E"/><path d="M2 4.5 H7" stroke="#D0D0D0" stroke-width="1.2"/></svg>
<svg class="a" style="left:229px;top:250px;" width="9" height="9" viewBox="0 0 9 9"><rect x="0.5" y="0.5" width="8" height="8" stroke="#A5A5A5" fill="#1E1E1E"/><path d="M2 4.5 H7" stroke="#D0D0D0" stroke-width="1.2"/></svg>
<svg class="a" style="left:243px;top:219px;" width="1" height="768" viewBox="0 0 1 768"><path d="M0.5 0 V768" stroke="#5A5A5A" stroke-width="1" stroke-dasharray="4 2"/></svg>
<svg class="a" style="left:287px;top:290px;" width="1" height="23" viewBox="0 0 1 23"><path d="M0.5 0 V23" stroke="#5A5A5A" stroke-width="1" stroke-dasharray="4 2"/></svg>
<div class="a" style="left:131px;top:172px;width:1531px;height:815px;overflow:hidden;"><div class="t" style="left:49.0px;top:1.50px;width:22.0px;text-align:right;font:18.33px/23.485px 'Liberation Mono',monospace;color:#2B91AF;-webkit-text-stroke:0.45px;">38</div><div class="t" style="left:108.0px;top:0.50px;font:18.33px/23.485px 'Liberation Mono',monospace;white-space:pre;-webkit-text-stroke:0.45px;"><span style="color:#569CD6">void</span> <span style="color:#DCDCAA">main</span><span style="color:#F5A623">()</span></div><div class="t" style="left:49.0px;top:24.99px;width:22.0px;text-align:right;font:18.33px/23.485px 'Liberation Mono',monospace;color:#2B91AF;-webkit-text-stroke:0.45px;">39</div><div class="t" style="left:108.0px;top:23.99px;font:18.33px/23.485px 'Liberation Mono',monospace;white-space:pre;-webkit-text-stroke:0.45px;"><span style="color:#F5A623">{</span></div><div class="t" style="left:49.0px;top:48.47px;width:22.0px;text-align:right;font:18.33px/23.485px 'Liberation Mono',monospace;color:#2B91AF;-webkit-text-stroke:0.45px;">40</div><div class="t" style="left:108.0px;top:47.47px;font:18.33px/23.485px 'Liberation Mono',monospace;white-space:pre;-webkit-text-stroke:0.45px;">    <span style="color:#4EC9B0">FILE</span><span style="color:#B4B4B4">* </span><span style="color:#9CDCFE">pipe</span><span style="color:#B4B4B4"> = </span><span style="color:#DCDCAA">_popen</span><span style="color:#FF2D9C">(</span><span style="color:#E8E8E8">"</span><span style="color:#D69D85">gnuplot</span><span style="color:#E8E8E8">"</span><span style="color:#B4B4B4">, </span><span style="color:#E8E8E8">"</span><span style="color:#D69D85">w</span><span style="color:#E8E8E8">"</span><span style="color:#FF2D9C">)</span><span style="color:#B4B4B4">;</span></div><div class="t" style="left:49.0px;top:71.95px;width:22.0px;text-align:right;font:18.33px/23.485px 'Liberation Mono',monospace;color:#2B91AF;-webkit-text-stroke:0.45px;">41</div><div class="t" style="left:108.0px;top:70.95px;font:18.33px/23.485px 'Liberation Mono',monospace;white-space:pre;-webkit-text-stroke:0.45px;">    <span style="color:#D8A0DF">if</span> <span style="color:#FF2D9C">(</span><span style="color:#9CDCFE">pipe</span><span style="color:#B4B4B4"> == </span><span style="color:#BEB7FF">NULL</span><span style="color:#FF2D9C">)</span></div><div class="t" style="left:49.0px;top:95.44px;width:22.0px;text-align:right;font:18.33px/23.485px 'Liberation Mono',monospace;color:#2B91AF;-webkit-text-stroke:0.45px;">42</div><div class="t" style="left:108.0px;top:94.44px;font:18.33px/23.485px 'Liberation Mono',monospace;white-space:pre;-webkit-text-stroke:0.45px;">    <span style="color:#FF2D9C">{</span></div><div class="t" style="left:49.0px;top:118.93px;width:22.0px;text-align:right;font:18.33px/23.485px 'Liberation Mono',monospace;color:#2B91AF;-webkit-text-stroke:0.45px;">43</div><div class="t" style="left:108.0px;top:117.93px;font:18.33px/23.485px 'Liberation Mono',monospace;white-space:pre;-webkit-text-stroke:0.45px;">        <span style="color:#DCDCAA">exit</span><span style="color:#7FC15B">(</span><span style="color:#B5CEA8">-1</span><span style="color:#7FC15B">)</span><span style="color:#B4B4B4">;</span></div><div class="t" style="left:49.0px;top:142.41px;width:22.0px;text-align:right;font:18.33px/23.485px 'Liberation Mono',monospace;color:#2B91AF;-webkit-text-stroke:0.45px;">44</div><div class="t" style="left:108.0px;top:141.41px;font:18.33px/23.485px 'Liberation Mono',monospace;white-space:pre;-webkit-text-stroke:0.45px;">    <span style="color:#FF2D9C">}</span></div><div class="t" style="left:49.0px;top:165.89px;width:22.0px;text-align:right;font:18.33px/23.485px 'Liberation Mono',monospace;color:#2B91AF;-webkit-text-stroke:0.45px;">45</div><div class="t" style="left:108.0px;top:164.89px;font:18.33px/23.485px 'Liberation Mono',monospace;white-space:pre;-webkit-text-stroke:0.45px;"></div><div class="t" style="left:49.0px;top:189.38px;width:22.0px;text-align:right;font:18.33px/23.485px 'Liberation Mono',monospace;color:#2B91AF;-webkit-text-stroke:0.45px;">46</div><div class="t" style="left:108.0px;top:188.38px;font:18.33px/23.485px 'Liberation Mono',monospace;white-space:pre;-webkit-text-stroke:0.45px;">    <span style="color:#DCDCAA">fprintf</span><span style="color:#FF2D9C">(</span><span style="color:#9CDCFE">pipe</span><span style="color:#B4B4B4">, </span><span style="color:#E8E8E8">"</span><span style="color:#D69D85">set terminal wxt size 600, 400</span><span style="color:#E030E0">\n</span><span style="color:#E8E8E8">"</span><span style="color:#FF2D9C">)</span><span style="color:#B4B4B4">;</span></div><div class="t" style="left:49.0px;top:212.87px;width:22.0px;text-align:right;font:18.33px/23.485px 'Liberation Mono',monospace;color:#2B91AF;-webkit-text-stroke:0.45px;">47</div><div class="t" style="left:108.0px;top:211.87px;font:18.33px/23.485px 'Liberation Mono',monospace;white-space:pre;-webkit-text-stroke:0.45px;">    <span style="color:#DCDCAA">fprintf</span><span style="color:#FF2D9C">(</span><span style="color:#9CDCFE">pipe</span><span style="color:#B4B4B4">, </span><span style="color:#E8E8E8">"</span><span style="color:#D69D85">unset border</span><span style="color:#E030E0">\n</span><span style="color:#E8E8E8">"</span><span style="color:#FF2D9C">)</span><span style="color:#B4B4B4">;</span></div><div class="t" style="left:49.0px;top:236.35px;width:22.0px;text-align:right;font:18.33px/23.485px 'Liberation Mono',monospace;color:#2B91AF;-webkit-text-stroke:0.45px;">48</div><div class="t" style="left:108.0px;top:235.35px;font:18.33px/23.485px 'Liberation Mono',monospace;white-space:pre;-webkit-text-stroke:0.45px;">    <span style="color:#DCDCAA">fprintf</span><span style="color:#FF2D9C">(</span><span style="color:#9CDCFE">pipe</span><span style="color:#B4B4B4">, </span><span style="color:#E8E8E8">"</span><span style="color:#D69D85">set dummy u, v</span><span style="color:#E030E0">\n</span><span style="color:#E8E8E8">"</span><span style="color:#FF2D9C">)</span><span style="color:#B4B4B4">;</span></div><div class="t" style="left:49.0px;top:259.83px;width:22.0px;text-align:right;font:18.33px/23.485px 'Liberation Mono',monospace;color:#2B91AF;-webkit-text-stroke:0.45px;">49</div><div class="t" style="left:108.0px;top:258.83px;font:18.33px/23.485px 'Liberation Mono',monospace;white-space:pre;-webkit-text-stroke:0.45px;">    <span style="color:#DCDCAA">fprintf</span><span style="color:#FF2D9C">(</span><span style="color:#9CDCFE">pipe</span><span style="color:#B4B4B4">, </span><span style="color:#E8E8E8">"</span><span style="color:#D69D85">set angles degrees</span><span style="color:#E030E0">\n</span><span style="color:#E8E8E8">"</span><span style="color:#FF2D9C">)</span><span style="color:#B4B4B4">;</span></div><div class="t" style="left:49.0px;top:283.32px;width:22.0px;text-align:right;font:18.33px/23.485px 'Liberation Mono',monospace;color:#2B91AF;-webkit-text-stroke:0.45px;">50</div><div class="t" style="left:108.0px;top:282.32px;font:18.33px/23.485px 'Liberation Mono',monospace;white-space:pre;-webkit-text-stroke:0.45px;">    <span style="color:#DCDCAA">fprintf</span><span style="color:#FF2D9C">(</span><span style="color:#9CDCFE">pipe</span><span style="color:#B4B4B4">, </span><span style="color:#E8E8E8">"</span><span style="color:#D69D85">set parametric</span><span style="color:#E030E0">\n</span><span style="color:#E8E8E8">"</span><span style="color:#FF2D9C">)</span><span style="color:#B4B4B4">;</span></div><div class="t" style="left:49.0px;top:306.81px;width:22.0px;text-align:right;font:18.33px/23.485px 'Liberation Mono',monospace;color:#2B91AF;-webkit-text-stroke:0.45px;">51</div><div class="t" style="left:108.0px;top:305.81px;font:18.33px/23.485px 'Liberation Mono',monospace;white-space:pre;-webkit-text-stroke:0.45px;">    <span style="color:#DCDCAA">fprintf</span><span style="color:#FF2D9C">(</span><span style="color:#9CDCFE">pipe</span><span style="color:#B4B4B4">, </span><span style="color:#E8E8E8">"</span><span style="color:#D69D85">set view 60, 136, 1.22, 1.26</span><span style="color:#E030E0">\n</span><span style="color:#E8E8E8">"</span><span style="color:#FF2D9C">)</span><span style="color:#B4B4B4">;</span></div><div class="t" style="left:49.0px;top:330.29px;width:22.0px;text-align:right;font:18.33px/23.485px 'Liberation Mono',monospace;color:#2B91AF;-webkit-text-stroke:0.45px;">52</div><div class="t" style="left:108.0px;top:329.29px;font:18.33px/23.485px 'Liberation Mono',monospace;white-space:pre;-webkit-text-stroke:0.45px;">    <span style="color:#DCDCAA">fprintf</span><span style="color:#FF2D9C">(</span><span style="color:#9CDCFE">pipe</span><span style="color:#B4B4B4">, </span><span style="color:#E8E8E8">"</span><span style="color:#D69D85">set samples 64, 64</span><span style="color:#E030E0">\n</span><span style="color:#E8E8E8">"</span><span style="color:#FF2D9C">)</span><span style="color:#B4B4B4">;</span></div><div class="t" style="left:49.0px;top:353.77px;width:22.0px;text-align:right;font:18.33px/23.485px 'Liberation Mono',monospace;color:#2B91AF;-webkit-text-stroke:0.45px;">53</div><div class="t" style="left:108.0px;top:352.77px;font:18.33px/23.485px 'Liberation Mono',monospace;white-space:pre;-webkit-text-stroke:0.45px;">    <span style="color:#DCDCAA">fprintf</span><span style="color:#FF2D9C">(</span><span style="color:#9CDCFE">pipe</span><span style="color:#B4B4B4">, </span><span style="color:#E8E8E8">"</span><span style="color:#D69D85">set isosamples 13, 13</span><span style="color:#E030E0">\n</span><span style="color:#E8E8E8">"</span><span style="color:#FF2D9C">)</span><span style="color:#B4B4B4">;</span></div><div class="t" style="left:49.0px;top:377.26px;width:22.0px;text-align:right;font:18.33px/23.485px 'Liberation Mono',monospace;color:#2B91AF;-webkit-text-stroke:0.45px;">54</div><div class="t" style="left:108.0px;top:376.26px;font:18.33px/23.485px 'Liberation Mono',monospace;white-space:pre;-webkit-text-stroke:0.45px;">    <span style="color:#DCDCAA">fprintf</span><span style="color:#FF2D9C">(</span><span style="color:#9CDCFE">pipe</span><span style="color:#B4B4B4">, </span><span style="color:#E8E8E8">"</span><span style="color:#D69D85">set mapping spherical</span><span style="color:#E030E0">\n</span><span style="color:#E8E8E8">"</span><span style="color:#FF2D9C">)</span><span style="color:#B4B4B4">;</span></div><div class="t" style="left:49.0px;top:400.75px;width:22.0px;text-align:right;font:18.33px/23.485px 'Liberation Mono',monospace;color:#2B91AF;-webkit-text-stroke:0.45px;">55</div><div class="t" style="left:108.0px;top:399.75px;font:18.33px/23.485px 'Liberation Mono',monospace;white-space:pre;-webkit-text-stroke:0.45px;">    <span style="color:#DCDCAA">fprintf</span><span style="color:#FF2D9C">(</span><span style="color:#9CDCFE">pipe</span><span style="color:#B4B4B4">, </span><span style="color:#E8E8E8">"</span><span style="color:#D69D85">set style data lines</span><span style="color:#E030E0">\n</span><span style="color:#E8E8E8">"</span><span style="color:#FF2D9C">)</span><span style="color:#B4B4B4">;</span></div><div class="t" style="left:49.0px;top:424.23px;width:22.0px;text-align:right;font:18.33px/23.485px 'Liberation Mono',monospace;color:#2B91AF;-webkit-text-stroke:0.45px;">56</div><div class="t" style="left:108.0px;top:423.23px;font:18.33px/23.485px 'Liberation Mono',monospace;white-space:pre;-webkit-text-stroke:0.45px;">    <span style="color:#DCDCAA">fprintf</span><span style="color:#FF2D9C">(</span><span style="color:#9CDCFE">pipe</span><span style="color:#B4B4B4">, </span><span style="color:#E8E8E8">"</span><span style="color:#D69D85">unset xtics</span><span style="color:#E030E0">\n</span><span style="color:#E8E8E8">"</span><span style="color:#FF2D9C">)</span><span style="color:#B4B4B4">;</span></div><div class="t" style="left:49.0px;top:447.71px;width:22.0px;text-align:right;font:18.33px/23.485px 'Liberation Mono',monospace;color:#2B91AF;-webkit-text-stroke:0.45px;">57</div><div class="t" style="left:108.0px;top:446.71px;font:18.33px/23.485px 'Liberation Mono',monospace;white-space:pre;-webkit-text-stroke:0.45px;">    <span style="color:#DCDCAA">fprintf</span><span style="color:#FF2D9C">(</span><span style="color:#9CDCFE">pipe</span><span style="color:#B4B4B4">, </span><span style="color:#E8E8E8">"</span><span style="color:#D69D85">unset ytics</span><span style="color:#E030E0">\n</span><span style="color:#E8E8E8">"</span><span style="color:#FF2D9C">)</span><span style="color:#B4B4B4">;</span></div><div class="t" style="left:49.0px;top:471.20px;width:22.0px;text-align:right;font:18.33px/23.485px 'Liberation Mono',monospace;color:#2B91AF;-webkit-text-stroke:0.45px;">58</div><div class="t" style="left:108.0px;top:470.20px;font:18.33px/23.485px 'Liberation Mono',monospace;white-space:pre;-webkit-text-stroke:0.45px;">    <span style="color:#DCDCAA">fprintf</span><span style="color:#FF2D9C">(</span><span style="color:#9CDCFE">pipe</span><span style="color:#B4B4B4">, </span><span style="color:#E8E8E8">"</span><span style="color:#D69D85">unset ztics</span><span style="color:#E030E0">\n</span><span style="color:#E8E8E8">"</span><span style="color:#FF2D9C">)</span><span style="color:#B4B4B4">;</span></div><div class="t" style="left:49.0px;top:494.68px;width:22.0px;text-align:right;font:18.33px/23.485px 'Liberation Mono',monospace;color:#2B91AF;-webkit-text-stroke:0.45px;">59</div><div class="t" style="left:108.0px;top:493.68px;font:18.33px/23.485px 'Liberation Mono',monospace;white-space:pre;-webkit-text-stroke:0.45px;">    <span style="color:#DCDCAA">fprintf</span><span style="color:#FF2D9C">(</span><span style="color:#9CDCFE">pipe</span><span style="color:#B4B4B4">, </span><span style="color:#E8E8E8">"</span><span style="color:#D69D85">set title 'Test gnuplot'</span><span style="color:#E030E0">\n</span><span style="color:#E8E8E8">"</span><span style="color:#FF2D9C">)</span><span style="color:#B4B4B4">;</span></div><div class="t" style="left:49.0px;top:518.17px;width:22.0px;text-align:right;font:18.33px/23.485px 'Liberation Mono',monospace;color:#2B91AF;-webkit-text-stroke:0.45px;">60</div><div class="t" style="left:108.0px;top:517.17px;font:18.33px/23.485px 'Liberation Mono',monospace;white-space:pre;-webkit-text-stroke:0.45px;">    <span style="color:#DCDCAA">fprintf</span><span style="color:#FF2D9C">(</span><span style="color:#9CDCFE">pipe</span><span style="color:#B4B4B4">, </span><span style="color:#E8E8E8">"</span><span style="color:#D69D85">set urange [ -90.0000 : 90.0000 ] noreverse nowriteback</span><span style="color:#E030E0">\n</span><span style="color:#E8E8E8">"</span><span style="color:#FF2D9C">)</span><span style="color:#B4B4B4">;</span></div><div class="t" style="left:49.0px;top:541.65px;width:22.0px;text-align:right;font:18.33px/23.485px 'Liberation Mono',monospace;color:#2B91AF;-webkit-text-stroke:0.45px;">61</div><div class="t" style="left:108.0px;top:540.65px;font:18.33px/23.485px 'Liberation Mono',monospace;white-space:pre;-webkit-text-stroke:0.45px;">    <span style="color:#DCDCAA">fprintf</span><span style="color:#FF2D9C">(</span><span style="color:#9CDCFE">pipe</span><span style="color:#B4B4B4">, </span><span style="color:#E8E8E8">"</span><span style="color:#D69D85">set vrange [ 0.00000 : 360.000 ] noreverse nowriteback</span><span style="color:#E030E0">\n</span><span style="color:#E8E8E8">"</span><span style="color:#FF2D9C">)</span><span style="color:#B4B4B4">;</span></div><div class="t" style="left:49.0px;top:565.14px;width:22.0px;text-align:right;font:18.33px/23.485px 'Liberation Mono',monospace;color:#2B91AF;-webkit-text-stroke:0.45px;">62</div><div class="t" style="left:108.0px;top:564.14px;font:18.33px/23.485px 'Liberation Mono',monospace;white-space:pre;-webkit-text-stroke:0.45px;">    <span style="color:#DCDCAA">fprintf</span><span style="color:#FF2D9C">(</span><span style="color:#9CDCFE">pipe</span><span style="color:#B4B4B4">, </span><span style="color:#E8E8E8">"</span><span style="color:#D69D85">set xrange [ * : * ] noreverse writeback</span><span style="color:#E030E0">\n</span><span style="color:#E8E8E8">"</span><span style="color:#FF2D9C">)</span><span style="color:#B4B4B4">;</span></div><div class="t" style="left:49.0px;top:588.62px;width:22.0px;text-align:right;font:18.33px/23.485px 'Liberation Mono',monospace;color:#2B91AF;-webkit-text-stroke:0.45px;">63</div><div class="t" style="left:108.0px;top:587.62px;font:18.33px/23.485px 'Liberation Mono',monospace;white-space:pre;-webkit-text-stroke:0.45px;">    <span style="color:#DCDCAA">fprintf</span><span style="color:#FF2D9C">(</span><span style="color:#9CDCFE">pipe</span><span style="color:#B4B4B4">, </span><span style="color:#E8E8E8">"</span><span style="color:#D69D85">set x2range [ * : * ] noreverse writeback</span><span style="color:#E030E0">\n</span><span style="color:#E8E8E8">"</span><span style="color:#FF2D9C">)</span><span style="color:#B4B4B4">;</span></div><div class="t" style="left:49.0px;top:612.11px;width:22.0px;text-align:right;font:18.33px/23.485px 'Liberation Mono',monospace;color:#2B91AF;-webkit-text-stroke:0.45px;">64</div><div class="t" style="left:108.0px;top:611.11px;font:18.33px/23.485px 'Liberation Mono',monospace;white-space:pre;-webkit-text-stroke:0.45px;">    <span style="color:#DCDCAA">fprintf</span><span style="color:#FF2D9C">(</span><span style="color:#9CDCFE">pipe</span><span style="color:#B4B4B4">, </span><span style="color:#E8E8E8">"</span><span style="color:#D69D85">set yrange [ * : * ] noreverse writeback</span><span style="color:#E030E0">\n</span><span style="color:#E8E8E8">"</span><span style="color:#FF2D9C">)</span><span style="color:#B4B4B4">;</span></div><div class="t" style="left:49.0px;top:635.60px;width:22.0px;text-align:right;font:18.33px/23.485px 'Liberation Mono',monospace;color:#2B91AF;-webkit-text-stroke:0.45px;">65</div><div class="t" style="left:108.0px;top:634.60px;font:18.33px/23.485px 'Liberation Mono',monospace;white-space:pre;-webkit-text-stroke:0.45px;">    <span style="color:#DCDCAA">fprintf</span><span style="color:#FF2D9C">(</span><span style="color:#9CDCFE">pipe</span><span style="color:#B4B4B4">, </span><span style="color:#E8E8E8">"</span><span style="color:#D69D85">set y2range [ * : * ] noreverse writeback</span><span style="color:#E030E0">\n</span><span style="color:#E8E8E8">"</span><span style="color:#FF2D9C">)</span><span style="color:#B4B4B4">;</span></div><div class="t" style="left:49.0px;top:659.08px;width:22.0px;text-align:right;font:18.33px/23.485px 'Liberation Mono',monospace;color:#2B91AF;-webkit-text-stroke:0.45px;">66</div><div class="t" style="left:108.0px;top:658.08px;font:18.33px/23.485px 'Liberation Mono',monospace;white-space:pre;-webkit-text-stroke:0.45px;">    <span style="color:#DCDCAA">fprintf</span><span style="color:#FF2D9C">(</span><span style="color:#9CDCFE">pipe</span><span style="color:#B4B4B4">, </span><span style="color:#E8E8E8">"</span><span style="color:#D69D85">set zrange [ * : * ] noreverse writeback</span><span style="color:#E030E0">\n</span><span style="color:#E8E8E8">"</span><span style="color:#FF2D9C">)</span><span style="color:#B4B4B4">;</span></div><div class="t" style="left:49.0px;top:682.56px;width:22.0px;text-align:right;font:18.33px/23.485px 'Liberation Mono',monospace;color:#2B91AF;-webkit-text-stroke:0.45px;">67</div><div class="t" style="left:108.0px;top:681.56px;font:18.33px/23.485px 'Liberation Mono',monospace;white-space:pre;-webkit-text-stroke:0.45px;">    <span style="color:#DCDCAA">fprintf</span><span style="color:#FF2D9C">(</span><span style="color:#9CDCFE">pipe</span><span style="color:#B4B4B4">, </span><span style="color:#E8E8E8">"</span><span style="color:#D69D85">set cblabel 'GeV'</span><span style="color:#E030E0">\n</span><span style="color:#E8E8E8">"</span><span style="color:#FF2D9C">)</span><span style="color:#B4B4B4">;</span></div><div class="t" style="left:49.0px;top:706.05px;width:22.0px;text-align:right;font:18.33px/23.485px 'Liberation Mono',monospace;color:#2B91AF;-webkit-text-stroke:0.45px;">68</div><div class="t" style="left:108.0px;top:705.05px;font:18.33px/23.485px 'Liberation Mono',monospace;white-space:pre;-webkit-text-stroke:0.45px;">    <span style="color:#DCDCAA">fprintf</span><span style="color:#FF2D9C">(</span><span style="color:#9CDCFE">pipe</span><span style="color:#B4B4B4">, </span><span style="color:#E8E8E8">"</span><span style="color:#D69D85">set cbrange [ 0.00000 : 8.00000 ] noreverse nowriteback</span><span style="color:#E030E0">\n</span><span style="color:#E8E8E8">"</span><span style="color:#FF2D9C">)</span><span style="color:#B4B4B4">;</span></div><div class="t" style="left:49.0px;top:729.53px;width:22.0px;text-align:right;font:18.33px/23.485px 'Liberation Mono',monospace;color:#2B91AF;-webkit-text-stroke:0.45px;">69</div><div class="t" style="left:108.0px;top:728.53px;font:18.33px/23.485px 'Liberation Mono',monospace;white-space:pre;-webkit-text-stroke:0.45px;">    <span style="color:#DCDCAA">fprintf</span><span style="color:#FF2D9C">(</span><span style="color:#9CDCFE">pipe</span><span style="color:#B4B4B4">, </span><span style="color:#E8E8E8">"</span><span style="color:#D69D85">set rrange [ * : * ] noreverse writeback</span><span style="color:#E030E0">\n</span><span style="color:#E8E8E8">"</span><span style="color:#FF2D9C">)</span><span style="color:#B4B4B4">;</span></div><div class="t" style="left:49.0px;top:753.02px;width:22.0px;text-align:right;font:18.33px/23.485px 'Liberation Mono',monospace;color:#2B91AF;-webkit-text-stroke:0.45px;">70</div><div class="t" style="left:108.0px;top:752.02px;font:18.33px/23.485px 'Liberation Mono',monospace;white-space:pre;-webkit-text-stroke:0.45px;">    <span style="color:#DCDCAA">fprintf</span><span style="color:#FF2D9C">(</span><span style="color:#9CDCFE">pipe</span><span style="color:#B4B4B4">, </span><span style="color:#E8E8E8">"</span><span style="color:#D69D85">set colorbox user</span><span style="color:#E030E0">\n</span><span style="color:#E8E8E8">"</span><span style="color:#FF2D9C">)</span><span style="color:#B4B4B4">;</span></div><div class="t" style="left:49.0px;top:776.50px;width:22.0px;text-align:right;font:18.33px/23.485px 'Liberation Mono',monospace;color:#2B91AF;-webkit-text-stroke:0.45px;">71</div><div class="t" style="left:108.0px;top:775.50px;font:18.33px/23.485px 'Liberation Mono',monospace;white-space:pre;-webkit-text-stroke:0.45px;">    <span style="color:#DCDCAA">fprintf</span><span style="color:#FF2D9C">(</span><span style="color:#9CDCFE">pipe</span><span style="color:#B4B4B4">, </span><span style="color:#E8E8E8">"</span><span style="color:#D69D85">set colorbox vertical origin screen 0.9, 0.2 size screen 0.02, 0.75 front  noinvert bdefault</span><span style="color:#E030E0">\n</span><span style="color:#E8E8E8">"</span><span style="color:#FF2D9C">)</span><span style="color:#B4B4B4">;</span></div><div class="t" style="left:49.0px;top:799.99px;width:22.0px;text-align:right;font:18.33px/23.485px 'Liberation Mono',monospace;color:#2B91AF;-webkit-text-stroke:0.45px;">72</div><div class="t" style="left:108.0px;top:798.99px;font:18.33px/23.485px 'Liberation Mono',monospace;white-space:pre;-webkit-text-stroke:0.45px;">    <span style="color:#DCDCAA">fprintf</span><span style="color:#FF2D9C">(</span><span style="color:#9CDCFE">pipe</span><span style="color:#B4B4B4">, </span><span style="color:#E8E8E8">"</span><span style="color:#D69D85">NO_ANIMATION = 1</span><span style="color:#E030E0">\n</span><span style="color:#E8E8E8">"</span><span style="color:#FF2D9C">)</span><span style="color:#B4B4B4">;</span></div></div>
<div class="a" style="left:130px;top:172px;width:1px;height:836px;background:#3F3F46;"></div>
<div class="a" style="left:1662px;top:172px;width:30px;height:814px;background:#3E3E42;"></div>
<div class="a" style="left:1667px;top:540px;width:19px;height:144px;background:#686868;"></div>
<div class="a" style="left:1663px;top:580px;width:5px;height:20px;background:#5C7A2E;"></div>
<div class="a" style="left:1663px;top:685px;width:5px;height:11px;background:#5C7A2E;"></div>
<div class="a" style="left:1662px;top:592.5px;width:29px;height:2px;background:#C8C8C8;"></div>
<svg class="a" style="left:1671px;top:971px;" width="12" height="7" viewBox="0 0 12 7"><path d="M0 0 H12 L6 6 Z" fill="#999999"/></svg>
<div class="a" style="left:131px;top:986px;width:1561px;height:22px;background:#3E3E42;"></div>
<div class="a" style="left:131px;top:987px;width:75px;height:20px;background:#333337;"></div>
<div class="t" style="left:134px;top:987.5px;font-size:15px;line-height:20px;color:#F1F1F1;font-weight:normal;font-family:'Liberation Sans',sans-serif;letter-spacing:-0.6px;">75 %</div>
<svg class="a" style="left:194px;top:995px;" width="8" height="5" viewBox="0 0 8 5"><path d="M0 0 L8 0 L4.0 4.0 Z" fill="#F1F1F1"/></svg>
<svg class="a" style="left:234px;top:989px;" width="17" height="17" viewBox="0 0 17 17"><circle cx="8.5" cy="8.5" r="8" fill="#E8E8E8"/><circle cx="8.5" cy="8.5" r="6.8" fill="#1B9E3E"/><path d="M4.8 8.8 L7.5 11.5 L12.5 5.5" stroke="#FFFFFF" stroke-width="2.2" fill="none"/></svg>
<div class="t" style="left:256px;top:987.5px;font-size:15px;line-height:20px;color:#F1F1F1;font-weight:normal;font-family:'Liberation Sans',sans-serif;"><span class="cj">未</span><span class="cj">找</span><span class="cj">到</span><span class="cj">相</span><span class="cj">关</span><span class="cj">问</span><span class="cj">题</span></div>
<svg class="a" style="left:457px;top:991px;" width="8" height="12" viewBox="0 0 8 12"><path d="M8 0 L0 6 L8 12 Z" fill="#999999"/></svg>
<div class="a" style="left:472px;top:991px;width:847px;height:12px;background:#686868;"></div>
<svg class="a" style="left:1358px;top:991px;" width="7" height="12" viewBox="0 0 7 12"><path d="M0 0 L7 6 L0 12 Z" fill="#999999"/></svg>
<div class="t" style="left:1399px;top:987.5px;font-size:15px;line-height:20px;color:#F1F1F1;font-weight:normal;font-family:'Liberation Sans',sans-serif;letter-spacing:-0.4px;"><span class="cj">行</span>: 59</div>
<div class="t" style="left:1459px;top:987.5px;font-size:15px;line-height:20px;color:#F1F1F1;font-weight:normal;font-family:'Liberation Sans',sans-serif;letter-spacing:-0.3px;"><span class="cj">字</span><span class="cj">符</span>: 40</div>
<div class="t" style="left:1533px;top:987.5px;font-size:15px;line-height:20px;color:#F1F1F1;font-weight:normal;font-family:'Liberation Sans',sans-serif;letter-spacing:-0.4px;"><span class="cj">列</span>: 43</div>
<div class="t" style="left:1594px;top:987.5px;font-size:15px;line-height:20px;color:#F1F1F1;font-weight:normal;font-family:'Liberation Sans',sans-serif;"><span class="cj">混</span><span class="cj">合</span></div>
<div class="t" style="left:1647px;top:987.5px;font-size:15px;line-height:20px;color:#F1F1F1;font-weight:normal;font-family:'Liberation Sans',sans-serif;letter-spacing:-1.2px;">CRLF</div>
<div class="a" style="left:130px;top:1017px;width:534px;height:61px;background:#2D2D30;border:1px solid #3F3F46;box-sizing:border-box;"></div>
<div class="t" style="left:135px;top:1021.5px;font-size:15px;line-height:20px;color:#F1F1F1;font-weight:normal;font-family:'Liberation Sans',sans-serif;"><span class="cj">查</span><span class="cj">找</span><span class="cj">符</span><span class="cj">号</span><span class="cj">结</span><span class="cj">果</span></div>
<svg class="a" style="left:235px;top:1028px;" width="362" height="7"><defs><pattern id="dg235" width="5" height="5" patternUnits="userSpaceOnUse"><rect x="0" y="0" width="1" height="1" fill="#47474C"/><rect x="0" y="5" width="1" height="1" fill="#47474C"/><rect x="2" y="2" width="1" height="1" fill="#47474C"/></pattern></defs><rect width="362" height="6" fill="url(#dg235)"/></svg>
<svg class="a" style="left:601px;top:1028px;" width="10" height="6" viewBox="0 0 10 6"><path d="M0 0 H10 L5 5.5 Z" fill="#F1F1F1"/></svg>
<svg class="a" style="left:621px;top:1024px;" width="10" height="15" viewBox="0 0 10 15"><path d="M2 1 H8 M3 1 V8 H7 V1 M1 8.5 H9 M5 9 V14" stroke="#F1F1F1" stroke-width="1.6" fill="none"/></svg>
<svg class="a" style="left:643px;top:1025px;" width="12" height="12" viewBox="0 0 12 12"><path d="M0.7 0.7 L11.3 11.3 M11.3 0.7 L0.7 11.3" stroke="#F1F1F1" stroke-width="1.6"/></svg>
<svg class="a" style="left:140px;top:1051px;" width="17" height="17" viewBox="0 0 17 17"><path d="M0 1 L5 6 M5 1 L0 6" stroke="#5A5A5A" stroke-width="1.4"/><path d="M8 2 H16 M8 6 H16 M1 10 H16 M1 14 H16" stroke="#5A5A5A" stroke-width="2"/></svg>
<div class="a" style="left:163px;top:1049px;width:1px;height:22px;background:#3F3F46;"></div>
<svg class="a" style="left:178px;top:1052px;" width="15" height="14" viewBox="0 0 15 14"><path d="M6 1 L2 4 L6 7 M2 4 H10" stroke="#5A5A5A" stroke-width="1.5" fill="none"/><path d="M2 9 H14 M2 12.5 H14" stroke="#5A5A5A" stroke-width="1.6"/></svg>
<svg class="a" style="left:205px;top:1052px;" width="15" height="14" viewBox="0 0 15 14"><path d="M8 1 L12 4 L8 7 M2 4 H12" stroke="#5A5A5A" stroke-width="1.5" fill="none"/><path d="M2 9 H14 M2 12.5 H14" stroke="#5A5A5A" stroke-width="1.6"/></svg>
<div class="a" style="left:672px;top:1017px;width:1241px;height:61px;background:#2D2D30;border:1px solid #3F3F46;box-sizing:border-box;"></div>
<div class="t" style="left:677px;top:1021.5px;font-size:15px;line-height:20px;color:#F1F1F1;font-weight:normal;font-family:'Liberation Sans',sans-serif;"><span class="cj">输</span><span class="cj">出</span></div>
<svg class="a" style="left:715px;top:1028px;" width="1095" height="7"><defs><pattern id="dg715" width="5" height="5" patternUnits="userSpaceOnUse"><rect x="0" y="0" width="1" height="1" fill="#47474C"/><rect x="0" y="5" width="1" height="1" fill="#47474C"/><rect x="2" y="2" width="1" height="1" fill="#47474C"/></pattern></defs><rect width="1095" height="6" fill="url(#dg715)"/></svg>
<svg class="a" style="left:1815px;top:1024px;" width="100" height="16" viewBox="0 0 100 16"><rect x="0.5" y="3" width="99" height="10" rx="5" fill="#FFFFFF" stroke="#B0B0B0" stroke-width="0.6"/><rect x="6" y="6" width="27" height="4" rx="2" fill="#2D2D30"/><rect x="40" y="6" width="27" height="4" rx="2" fill="#2D2D30"/><rect x="73" y="6" width="22" height="4" rx="2" fill="#2D2D30"/><rect x="51" y="6" width="6" height="3" fill="#FFFFFF"/></svg>
<div class="t" style="left:682px;top:1050.5px;font-size:15px;line-height:20px;color:#F1F1F1;font-weight:normal;font-family:'Liberation Sans',sans-serif;"><span class="cj">显</span><span class="cj">示</span><span class="cj">输</span><span class="cj">出</span><span class="cj">来</span><span class="cj">源</span>(S):</div>
<div class="a" style="left:803px;top:1048px;width:375px;height:26px;background:#333337;border:1px solid #434346;box-sizing:border-box;"></div>
<div class="t" style="left:808px;top:1050.5px;font-size:15px;line-height:20px;color:#F1F1F1;font-weight:normal;font-family:'Liberation Sans',sans-serif;"><span class="cj">调</span><span class="cj">试</span></div>
<svg class="a" style="left:1163px;top:1058px;" width="8" height="5" viewBox="0 0 8 5"><path d="M0 0 L8 0 L4.0 4.0 Z" fill="#C8C8C8"/></svg>
<div class="a" style="left:1188px;top:1049px;width:1px;height:23px;background:#3F3F46;"></div>
<svg class="a" style="left:1197px;top:1051px;" width="18" height="17" viewBox="0 0 18 17"><path d="M7 1 L3 4 L7 7 M3 4 Q10 4 10 9" stroke="#5A5A5A" stroke-width="1.5" fill="none"/><path d="M3 12 H17 M3 15.5 H17" stroke="#5A5A5A" stroke-width="1.6"/></svg>
<div class="a" style="left:1225px;top:1049px;width:1px;height:23px;background:#3F3F46;"></div>
<svg class="a" style="left:1234px;top:1052px;" width="16" height="14" viewBox="0 0 16 14"><path d="M6 1 L2 4 L6 7 M2 4 H10" stroke="#5A5A5A" stroke-width="1.5" fill="none"/><path d="M2 9 H15 M2 12.5 H15" stroke="#5A5A5A" stroke-width="1.6"/></svg>
<svg class="a" style="left:1261px;top:1052px;" width="16" height="14" viewBox="0 0 16 14"><path d="M8 1 L12 4 L8 7 M2 4 H12" stroke="#5A5A5A" stroke-width="1.5" fill="none"/><path d="M2 9 H15 M2 12.5 H15" stroke="#5A5A5A" stroke-width="1.6"/></svg>
<div class="a" style="left:1288px;top:1049px;width:1px;height:23px;background:#3F3F46;"></div>
<svg class="a" style="left:1297px;top:1050px;" width="18" height="20" viewBox="0 0 18 20"><path d="M1 1.5 L6.5 7 M6.5 1.5 L1 7" stroke="#F48771" stroke-width="1.8"/><path d="M9.5 2.5 H17 M9.5 6.5 H17 M1.5 12 H17 M1.5 17 H17" stroke="#C8C8C8" stroke-width="2.2"/></svg>
<div class="a" style="left:1324px;top:1049px;width:1px;height:23px;background:#3F3F46;"></div>
<svg class="a" style="left:1334px;top:1050px;" width="19" height="19" viewBox="0 0 19 19"><text x="0" y="8.5" font-family="Liberation Sans" font-size="9.5" fill="#C8C8C8">ab</text><text x="0.3" y="16.5" font-family="Liberation Sans" font-size="9.5" fill="#C8C8C8">c</text><path d="M11 6 H17 V13.5 H9 M12.3 10 L8.5 13.5 L12.3 17" stroke="#C8C8C8" stroke-width="1.8" fill="none"/></svg>
<div class="a" style="left:424px;top:1078px;width:103px;height:25px;background:#252526;border:1px solid #3F3F46;box-sizing:border-box;border-top:none;"></div>
<div class="t" style="left:138px;top:1080.5px;font-size:15px;line-height:20px;color:#D0D0D0;font-weight:normal;font-family:'Liberation Sans',sans-serif;"><span class="cj">自</span><span class="cj">动</span><span class="cj">窗</span><span class="cj">口</span></div>
<div class="t" style="left:210px;top:1080.5px;font-size:15px;line-height:20px;color:#D0D0D0;font-weight:normal;font-family:'Liberation Sans',sans-serif;"><span class="cj">局</span><span class="cj">部</span><span class="cj">变</span><span class="cj">量</span></div>
<div class="t" style="left:285px;top:1080.5px;font-size:15px;line-height:20px;color:#D0D0D0;font-weight:normal;font-family:'Liberation Sans',sans-serif;"><span class="cj">线</span><span class="cj">程</span></div>
<div class="t" style="left:329px;top:1080.5px;font-size:15px;line-height:20px;color:#D0D0D0;font-weight:normal;font-family:'Liberation Sans',sans-serif;"><span class="cj">模</span><span class="cj">块</span></div>
<div class="t" style="left:372px;top:1080.5px;font-size:15px;line-height:20px;color:#D0D0D0;font-weight:normal;font-family:'Liberation Sans',sans-serif;"><span class="cj">监</span><span class="cj">视</span> 1</div>
<div class="t" style="left:430px;top:1080.5px;font-size:15px;line-height:20px;color:#3399FF;font-weight:normal;font-family:'Liberation Sans',sans-serif;"><span class="cj">查</span><span class="cj">找</span><span class="cj">符</span><span class="cj">号</span><span class="cj">结</span><span class="cj">果</span></div>
<div class="a" style="left:864px;top:1078px;width:44px;height:25px;background:#252526;border:1px solid #3F3F46;box-sizing:border-box;border-top:none;"></div>
<div class="t" style="left:679px;top:1080.5px;font-size:15px;line-height:20px;color:#D0D0D0;font-weight:normal;font-family:'Liberation Sans',sans-serif;"><span class="cj">调</span><span class="cj">用</span><span class="cj">堆</span><span class="cj">栈</span></div>
<div class="t" style="left:753px;top:1080.5px;font-size:15px;line-height:20px;color:#D0D0D0;font-weight:normal;font-family:'Liberation Sans',sans-serif;"><span class="cj">断</span><span class="cj">点</span></div>
<div class="t" style="left:797px;top:1080.5px;font-size:15px;line-height:20px;color:#D0D0D0;font-weight:normal;font-family:'Liberation Sans',sans-serif;"><span class="cj">异</span><span class="cj">常</span><span class="cj">设</span><span class="cj">置</span></div>
<div class="t" style="left:915px;top:1080.5px;font-size:15px;line-height:20px;color:#D0D0D0;font-weight:normal;font-family:'Liberation Sans',sans-serif;"><span class="cj">错</span><span class="cj">误</span><span class="cj">列</span><span class="cj">表</span></div>
<div class="t" style="left:871px;top:1080.5px;font-size:15px;line-height:20px;color:#3399FF;font-weight:normal;font-family:'Liberation Sans',sans-serif;"><span class="cj">输</span><span class="cj">出</span></div>
<div class="a" style="left:1700px;top:118px;width:213px;height:28px;background:#2D2D30;"></div>
<svg class="a" style="left:1850px;top:128px;" width="10" height="6" viewBox="0 0 10 6"><path d="M0 0 H10 L5 5.5 Z" fill="#F1F1F1"/></svg>
<svg class="a" style="left:1870px;top:124px;" width="10" height="15" viewBox="0 0 10 15"><path d="M2 1 H8 M3 1 V8 H7 V1 M1 8.5 H9 M5 9 V14" stroke="#F1F1F1" stroke-width="1.6" fill="none"/></svg>
<svg class="a" style="left:1891px;top:125px;" width="12" height="12" viewBox="0 0 12 12"><path d="M0.7 0.7 L11.3 11.3 M11.3 0.7 L0.7 11.3" stroke="#F1F1F1" stroke-width="1.6"/></svg>
<div class="a" style="left:1700px;top:146px;width:213px;height:34px;background:#2D2D30;"></div>
<svg class="a" style="left:1842px;top:152px;" width="9" height="18" viewBox="0 0 9 18"><path d="M1 1 L8 12" stroke="#C8C8C8" stroke-width="2"/></svg>
<svg class="a" style="left:1862px;top:150px;" width="19" height="22" viewBox="0 0 19 22"><path d="M4 5 Q4 1 7.5 1 Q11 1 11 4.5 Q11 7 8 8 V10" stroke="#C8C8C8" stroke-width="1.6" fill="none"/><rect x="2" y="12" width="3" height="9" fill="#C8C8C8"/><rect x="7" y="10" width="3" height="11" fill="#C8C8C8"/><rect x="12" y="14" width="3" height="7" fill="#C8C8C8"/><rect x="16" y="16" width="3" height="5" fill="#C8C8C8"/></svg>
<div class="a" style="left:1700px;top:180px;width:193px;height:368px;background:#252526;"></div>
<div class="a" style="left:1845px;top:205px;width:46px;height:30px;background:#252526;border:1px solid #3F3F46;box-sizing:border-box;border-right:none;"></div>
<div class="a" style="left:1866px;top:206px;width:6px;height:27px;background:#E8E8E8;"></div>
<div class="a" style="left:1845px;top:258px;width:1px;height:30px;background:#3F3F46;"></div>
<div class="a" style="left:1845px;top:317px;width:1px;height:86px;background:#3F3F46;"></div>
<div class="a" style="left:1845px;top:427px;width:1px;height:86px;background:#3F3F46;"></div>
<div class="t" style="left:1852px;top:316.0px;font-size:15px;line-height:20px;color:#F1F1F1;font-weight:normal;font-family:'Liberation Sans',sans-serif;">7</div>
<div class="t" style="left:1852px;top:385.5px;font-size:15px;line-height:20px;color:#F1F1F1;font-weight:normal;font-family:'Liberation Sans',sans-serif;">0</div>
<div class="t" style="left:1838px;top:406.5px;font-size:15px;line-height:20px;color:#F1F1F1;font-weight:bold;font-family:'Liberation Sans',sans-serif;width:54px;overflow:hidden;"><span class="cj">的</span><span class="cj">百</span><span class="cj">分</span><span class="cj">比</span></div>
<div class="t" style="left:1852px;top:427.5px;font-size:15px;line-height:20px;color:#F1F1F1;font-weight:normal;font-family:'Liberation Sans',sans-serif;">100</div>
<div class="t" style="left:1852px;top:496.5px;font-size:15px;line-height:20px;color:#F1F1F1;font-weight:normal;font-family:'Liberation Sans',sans-serif;">0</div>
<div class="a" style="left:1891px;top:146px;width:22px;height:393px;background:#3E3E42;"></div>
<svg class="a" style="left:1893px;top:160px;" width="18" height="12" viewBox="0 0 18 12"><path d="M1.5 10.5 L9 3 L16.5 10.5" stroke="#999999" stroke-width="3" fill="none"/></svg>
<div class="a" style="left:1892px;top:180px;width:19px;height:322px;background:#686868;"></div>
<svg class="a" style="left:1893px;top:508px;" width="18" height="12" viewBox="0 0 18 12"><path d="M1.5 1.5 L9 9 L16.5 1.5" stroke="#999999" stroke-width="3" fill="none"/></svg>
<div class="a" style="left:1700px;top:539px;width:213px;height:2px;background:#3F3F46;"></div>
<div class="a" style="left:1700px;top:541px;width:213px;height:31px;background:#252526;"></div>
<div class="a" style="left:1878px;top:547px;width:34px;height:25px;background:#2D2D30;"></div>
<div class="a" style="left:1700px;top:571px;width:178px;height:1px;background:#3F3F46;"></div>
<div class="t" style="left:1700px;top:550.0px;font-size:15px;line-height:20px;color:#F1F1F1;font-weight:normal;font-family:'Liberation Sans',sans-serif;width:176px;text-align:right;">CPU <span class="cj">使</span><span class="cj">用</span><span class="cj">率</span></div>
<svg class="a" style="left:1882px;top:555px;" width="8" height="10" viewBox="0 0 8 10"><path d="M8 0 L0 5 L8 10 Z" fill="#F1F1F1"/></svg>
<svg class="a" style="left:1899px;top:555px;" width="8" height="10" viewBox="0 0 8 10"><path d="M0 0 L8 5 L0 10 Z" fill="#F1F1F1"/></svg>
<div class="a" style="left:1700px;top:572px;width:213px;height:437px;background:#252526;border:1px solid #3F3F46;box-sizing:border-box;"></div>
<div class="a" style="left:1701px;top:602px;width:211px;height:1px;background:#3F3F46;"></div>
<div class="a" style="left:1701px;top:637px;width:211px;height:1px;background:#3F3F46;"></div>
<div class="a" style="left:1701px;top:666px;width:211px;height:1px;background:#3F3F46;"></div>
<div class="a" style="left:1701px;top:735px;width:211px;height:1px;background:#3F3F46;"></div>
<div class="a" style="left:1701px;top:764px;width:211px;height:1px;background:#3F3F46;"></div>
<div class="t" style="left:1713px;top:580.0px;font-size:15px;line-height:20px;color:#F1F1F1;font-weight:bold;font-family:'Liberation Sans',sans-serif;"><span class="cj">事</span><span class="cj">件</span></div>
<div class="t" style="left:1713px;top:642.0px;font-size:15px;line-height:20px;color:#F1F1F1;font-weight:bold;font-family:'Liberation Sans',sans-serif;"><span class="cj">内</span><span class="cj">存</span><span class="cj">使</span><span class="cj">用</span><span class="cj">率</span></div>
<div class="t" style="left:1713px;top:740.0px;font-size:15px;line-height:20px;color:#F1F1F1;font-weight:bold;font-family:'Liberation Sans',sans-serif;">CPU <span class="cj">使</span><span class="cj">用</span><span class="cj">率</span></div>
<svg class="a" style="left:1719px;top:614px;" width="18" height="12" viewBox="0 0 18 12"><path d="M0.8 6 L4.5 2.3 L8.2 6 L4.5 9.7 Z M5.5 6 L9.2 2.3 L12.9 6 L9.2 9.7 Z M10.2 6 L13.9 2.3 L17.6 6 L13.9 9.7 Z" stroke="#D0D0D0" stroke-width="1.3" fill="#8A8A8A" fill-opacity="0.35"/></svg>
<div class="t" style="left:1746px;top:610.5px;font-size:15px;line-height:20px;color:#F1F1F1;font-weight:normal;font-family:'Liberation Sans',sans-serif;width:150px;overflow:hidden;"><span class="cj">所</span><span class="cj">有</span><span class="cj">事</span><span class="cj">件</span>(0 <span class="cj">个</span><span class="cj">，</span><span class="cj">共</span> 0 <span class="cj">个</span>)</div>
<svg class="a" style="left:1719px;top:676px;" width="18" height="15" viewBox="0 0 18 15"><path d="M1 3 H5 L6.5 1 H11.5 L13 3 H17 V14 H1 Z" stroke="#D8D8D8" stroke-width="1.3" fill="none"/><circle cx="9" cy="8.5" r="3" stroke="#D8D8D8" stroke-width="1.3" fill="none"/><rect x="4" y="5" width="1.5" height="1.5" fill="#D8D8D8"/></svg>
<div class="t" style="left:1746px;top:674.5px;font-size:15px;line-height:20px;color:#7A7A7A;font-weight:normal;font-family:'Liberation Sans',sans-serif;"><span class="cj">截</span><span class="cj">取</span><span class="cj">快</span><span class="cj">照</span></div>
<svg class="a" style="left:1719px;top:710px;" width="18" height="16" viewBox="0 0 18 16"><rect x="2" y="3" width="14" height="10" stroke="#D8D8D8" stroke-width="1.4" fill="none"/><rect x="5" y="6" width="8" height="4" stroke="#D8D8D8" stroke-width="1.2" fill="none"/><path d="M4 0.5 V3 M7 0.5 V3 M10 0.5 V3 M13 0.5 V3 M4 13 V15.5 M7 13 V15.5 M10 13 V15.5 M13 13 V15.5" stroke="#D8D8D8" stroke-width="1.2"/></svg>
<div class="t" style="left:1746px;top:708.5px;font-size:15px;line-height:20px;color:#F1F1F1;font-weight:normal;font-family:'Liberation Sans',sans-serif;width:150px;overflow:hidden;"><span class="cj">启</span><span class="cj">用</span><span class="cj">堆</span><span class="cj">分</span><span class="cj">析</span>(<span class="cj">会</span><span class="cj">影</span><span class="cj">响</span><span class="cj">性</span><span class="cj">能</span>)</div>
<svg class="a" style="left:1720px;top:775px;" width="15" height="15" viewBox="0 0 15 15"><circle cx="7.5" cy="7.5" r="6.3" stroke="#E0E0E0" stroke-width="1.5" fill="#424242"/></svg>
<div class="t" style="left:1746px;top:772.5px;font-size:15px;line-height:20px;color:#F1F1F1;font-weight:normal;font-family:'Liberation Sans',sans-serif;"><span class="cj">记</span><span class="cj">录</span> CPU <span class="cj">配</span><span class="cj">置</span><span class="cj">文</span><span class="cj">件</span></div>
<div class="a" style="left:1700px;top:118px;width:213px;height:891px;background:none;border:1px solid #3F3F46;box-sizing:border-box;"></div>
<div class="a" style="left:0px;top:1110px;width:1920px;height:30px;background:#CA5100;"></div>
<svg class="a" style="left:5px;top:1118px;" width="21" height="15" viewBox="0 0 21 15"><path d="M5 1 H19.5 L16 13.8 H1.2 Z" stroke="#FFFFFF" stroke-width="1.5" fill="none"/></svg>
<div class="t" style="left:34px;top:1116.0px;font-size:15px;line-height:20px;color:#FFFFFF;font-weight:normal;font-family:'Liberation Sans',sans-serif;"><span class="cj">就</span><span class="cj">绪</span></div>
<svg class="a" style="left:1686px;top:1118px;" width="12" height="16" viewBox="0 0 12 16"><path d="M6 16 V2.5 M1.2 7.5 L6 2 L10.8 7.5" stroke="#E0E0E0" stroke-width="2.4" fill="none"/></svg>
<div class="t" style="left:1709px;top:1116.0px;font-size:15px;line-height:20px;color:#FFFFFF;font-weight:normal;font-family:'Liberation Sans',sans-serif;"><span class="cj">添</span><span class="cj">加</span><span class="cj">到</span><span class="cj">源</span><span class="cj">代</span><span class="cj">码</span><span class="cj">管</span><span class="cj">理</span></div>
<svg class="a" style="left:1837px;top:1121px;" width="10" height="6" viewBox="0 0 10 6"><path d="M0 6 H10 L5 0 Z" fill="#FFFFFF"/></svg>
<svg class="a" style="left:1871px;top:1115px;" width="28" height="25" viewBox="0 0 28 25"><path d="M1.5 17 Q4 15 4 9.5 Q4 2.5 10 2.5 Q16 2.5 16 9.5 Q16 15 18.5 17 Z" fill="#D0D0D0"/><rect x="8" y="17" width="4" height="3" fill="#D0D0D0"/><circle cx="18" cy="14.5" r="8" fill="#FFFFFF"/><text x="18" y="19.5" text-anchor="middle" font-family="Liberation Sans" font-size="14" fill="#1E1E50">1</text></svg>
<div class="a" style="left:1243px;top:88px;width:600px;height:498px;border-radius:8px;overflow:hidden;background:#FFFFFF;box-shadow:0 0 0 1px rgba(60,60,60,0.5);">
<div class="a" style="left:0px;top:0px;width:600px;height:37px;background:#EFF4F9;"></div>
<div class="a" style="left:0px;top:37px;width:600px;height:1px;background:#ADADAD;"></div>
<div class="a" style="left:0px;top:38px;width:600px;height:32px;background:#F0F0F0;"></div>
<svg class="a" style="left:9px;top:8px;" width="21" height="21" viewBox="0 0 21 21"><rect x="0.5" y="0.5" width="20" height="20" fill="#FFFFFF" stroke="#000000"/><path d="M4 1 V20 M1 17 H20" stroke="#000" stroke-width="0.8"/><path d="M2 12 Q8 4 18 2" stroke="#00B000" stroke-width="1.3" fill="none"/><path d="M2 18 Q6 10 10 14 Q14 18 19 9" stroke="#2020FF" stroke-width="1.3" fill="none"/><path d="M2 8 Q6 18 11 13 Q15 8 19 16" stroke="#E02020" stroke-width="1.3" fill="none"/></svg>
<div class="t" style="left:35px;top:8.5px;font-size:15px;line-height:20px;color:#000000;font-weight:normal;font-family:'Liberation Sans',sans-serif;">Gnuplot (window id : 0)</div>
<div class="a" style="left:447px;top:18px;width:12px;height:1px;background:#000000;"></div>
<svg class="a" style="left:504px;top:11.5px;" width="13" height="13" viewBox="0 0 13 13"><rect x="1" y="1" width="11" height="11" rx="1.5" stroke="#000" stroke-width="1.2" fill="none"/></svg>
<svg class="a" style="left:564px;top:12px;" width="13" height="13" viewBox="0 0 13 13"><path d="M0.5 0.5 L12.5 12.5 M12.5 0.5 L0.5 12.5" stroke="#000" stroke-width="1.2"/></svg>
<svg class="a" style="left:6px;top:43px;" width="18" height="20" viewBox="0 0 18 20"><rect x="1" y="3" width="16" height="16" rx="2" fill="#C98A3C" stroke="#8E5A1E"/><rect x="3.5" y="5" width="11" height="12" fill="#F4F4F4" stroke="#A0A0A0" stroke-width="0.6"/><rect x="5" y="1" width="8" height="4" rx="1" fill="#B8B8B8" stroke="#777" stroke-width="0.6"/><path d="M5.5 8 H12.5 M5.5 10.5 H12.5 M5.5 13 H10" stroke="#999" stroke-width="0.9"/></svg>
<svg class="a" style="left:35px;top:42px;" width="23" height="22" viewBox="0 0 23 22"><path d="M1 13 H22 V21 H1 Z" fill="#E0E0E0" stroke="#777"/><rect x="3" y="16" width="14" height="3" fill="#FFF" stroke="#888" stroke-width="0.6"/><path d="M8 1 H14 V8 H18 L11 14 L4 8 H8 Z" fill="#3A8FD8" stroke="#1F5E9C" stroke-width="0.8"/></svg>
<svg class="a" style="left:66px;top:44px;" width="21" height="20" viewBox="0 0 21 20"><rect x="5" y="1" width="11" height="8" fill="#FFF" stroke="#999"/><path d="M1 9 H20 V17 H1 Z" fill="#D8D8D8" stroke="#888"/><rect x="3" y="15" width="15" height="4" fill="#C4C4C4" stroke="#888" stroke-width="0.6"/><path d="M10.5 3 V7 M8.5 5 L10.5 3 L12.5 5" stroke="#777" stroke-width="0.8" fill="none"/></svg>
<div class="a" style="left:95px;top:41px;width:1px;height:26px;background:#A0A0A0;"></div>
<svg class="a" style="left:108px;top:46px;" width="15" height="15" viewBox="0 0 15 15"><path d="M2 7 Q2 2 8 2 L8 0 L12 3.5 L8 7 V5 Q5 5 4.5 7 Z" fill="#1C5FC8"/><path d="M13 8 Q13 13 7 13 V15 L3 11.5 L7 8 V10 Q10 10 10.5 8 Z" fill="#1C5FC8"/></svg>
<svg class="a" style="left:140px;top:47px;" width="15" height="15" viewBox="0 0 15 15"><path d="M1.5 0 V15 M5.5 0 V15 M9.5 0 V15 M13.5 0 V15 M0 1.5 H15 M0 5.5 H15 M0 9.5 H15 M0 13.5 H15" stroke="#000" stroke-width="1.3"/></svg>
<svg class="a" style="left:170px;top:45px;" width="17" height="17" viewBox="0 0 17 17"><circle cx="7.5" cy="7.5" r="6.8" fill="#4FB0F0" stroke="#1A3A70" stroke-width="1.2"/><path d="M4 7.5 L8 4 V6 H12 V9 H8 V11 Z" fill="#0020A0"/><path d="M12 12 L16 16" stroke="#000" stroke-width="2"/></svg>
<svg class="a" style="left:201px;top:45px;" width="17" height="17" viewBox="0 0 17 17"><circle cx="7.5" cy="7.5" r="6.8" fill="#4FB0F0" stroke="#1A3A70" stroke-width="1.2"/><path d="M12 7.5 L8 4 V6 H4 V9 H8 V11 Z" fill="#109010"/><path d="M12 12 L16 16" stroke="#000" stroke-width="2"/></svg>
<svg class="a" style="left:232px;top:45px;" width="17" height="17" viewBox="0 0 17 17"><circle cx="7.5" cy="7.5" r="6.8" fill="#4FB0F0" stroke="#1A3A70" stroke-width="1.2"/><rect x="3.5" y="3.5" width="8" height="8" fill="#FFF" stroke="#1A3A70" stroke-width="0.8"/><path d="M4 10 Q6 3 8 7 Q10 11 11 4" stroke="#D02020" stroke-width="1" fill="none"/><path d="M12 12 L16 16" stroke="#000" stroke-width="2"/></svg>
<div class="a" style="left:259px;top:41px;width:1px;height:26px;background:#A0A0A0;"></div>
<svg class="a" style="left:271px;top:45px;" width="17" height="17" viewBox="0 0 17 17"><path d="M2 15 L10 7" stroke="#8A5A10" stroke-width="3.5"/><path d="M2 15 L10 7" stroke="#F0B030" stroke-width="2"/><path d="M9 3 Q11 0 15 2 L12 5 L13 6 L16 3 Q17 8 12 9 Z" fill="#F0B030" stroke="#8A5A10" stroke-width="0.8"/></svg>
<svg class="a" style="left:303px;top:44px;" width="12" height="18" viewBox="0 0 12 18"><text x="6" y="16" text-anchor="middle" font-family="Liberation Sans" font-weight="bold" font-size="19" fill="#1A1AB0">?</text></svg>
<div class="t" style="left:0px;top:100.0px;font-size:16.5px;line-height:20px;color:#000000;font-weight:normal;font-family:'Liberation Sans',sans-serif;width:600px;text-align:center;left:-0.5px;">Test gnuplot</div>
<svg class="a" style="left:-1243px;top:-88px;" width="1920" height="1140"><path d="M1507.2 476.1 L1504.0 475.0 L1501.1 474.0 L1498.7 472.8 L1496.6 471.6 L1495.1 470.3 L1494.0 469.0 L1493.4 467.7 L1493.3 466.3 L1493.7 465.0 L1494.6 463.7 L1496.0 462.4 L1497.8 461.2 L1500.1 460.0 L1502.8 458.9 L1505.9 457.8 L1509.3 456.9 L1513.1 456.0 L1517.2 455.3 L1521.6 454.7 L1526.1 454.1 L1530.8 453.8 L1535.7 453.5 L1540.6 453.4 L1545.5 453.4 L1550.4 453.5 L1555.3 453.8 L1560.0 454.2 L1564.5 454.7 L1568.8 455.4 L1572.9 456.1 L1576.6 457.0 L1580.1 457.9 L1583.1 459.0 L1585.8 460.1 L1588.0 461.3 L1589.8 462.5 L1591.1 463.8 L1591.9 465.2 L1592.3 466.5 L1592.1 467.8 L1591.5 469.1 L1590.4 470.4 L1588.8 471.7 L1586.7 472.9 L1584.2 474.1 L1581.3 475.2 L1578.1 476.1 L1574.4 477.1 L1570.5 477.9 L1566.2 478.5 L1561.8 479.1 L1557.2 479.6 L1552.4 479.9 L1547.5 480.1 L1542.6 480.1 L1537.6 480.1 L1532.8 479.9 L1528.0 479.5 L1523.4 479.1 L1518.9 478.5 L1514.7 477.8 L1510.8 477.0 L1507.2 476.1 M1474.0 473.4 L1467.8 471.5 L1462.2 469.4 L1457.5 467.1 L1453.6 464.8 L1450.6 462.3 L1448.6 459.8 L1447.4 457.2 L1447.2 454.7 L1448.0 452.1 L1449.7 449.6 L1452.3 447.1 L1455.9 444.7 L1460.2 442.4 L1465.5 440.2 L1471.4 438.2 L1478.1 436.4 L1485.5 434.7 L1493.4 433.3 L1501.8 432.1 L1510.6 431.1 L1519.7 430.3 L1529.0 429.8 L1538.5 429.6 L1548.0 429.6 L1557.5 429.9 L1566.9 430.4 L1575.9 431.2 L1584.7 432.2 L1593.1 433.4 L1600.9 434.9 L1608.2 436.6 L1614.8 438.4 L1620.7 440.4 L1625.8 442.6 L1630.1 444.9 L1633.6 447.3 L1636.1 449.8 L1637.7 452.4 L1638.4 454.9 L1638.1 457.5 L1636.9 460.1 L1634.7 462.6 L1631.6 465.0 L1627.7 467.4 L1622.8 469.6 L1617.2 471.7 L1610.9 473.6 L1603.9 475.3 L1596.3 476.9 L1588.1 478.2 L1579.5 479.3 L1570.5 480.2 L1561.3 480.8 L1551.8 481.2 L1542.3 481.3 L1532.8 481.2 L1523.4 480.8 L1514.2 480.1 L1505.2 479.2 L1496.7 478.1 L1488.6 476.7 L1481.0 475.2 L1474.0 473.4 M1445.5 462.9 L1436.7 460.1 L1428.9 457.1 L1422.2 454.0 L1416.7 450.6 L1412.5 447.2 L1409.5 443.6 L1407.9 440.0 L1407.7 436.4 L1408.7 432.7 L1411.1 429.1 L1414.9 425.6 L1419.8 422.2 L1426.1 419.0 L1433.4 415.9 L1441.9 413.1 L1451.3 410.5 L1461.7 408.2 L1472.9 406.1 L1484.7 404.4 L1497.2 403.0 L1510.1 401.9 L1523.3 401.2 L1536.7 400.9 L1550.2 400.9 L1563.6 401.3 L1576.8 402.0 L1589.7 403.1 L1602.1 404.6 L1613.9 406.3 L1625.0 408.4 L1635.3 410.7 L1644.6 413.4 L1653.0 416.2 L1660.2 419.3 L1666.3 422.6 L1671.2 426.0 L1674.8 429.5 L1677.0 433.1 L1678.0 436.7 L1677.6 440.4 L1675.8 444.0 L1672.8 447.5 L1668.4 451.0 L1662.8 454.3 L1656.0 457.5 L1648.1 460.4 L1639.1 463.1 L1629.2 465.6 L1618.4 467.8 L1606.9 469.7 L1594.7 471.2 L1582.0 472.5 L1568.9 473.4 L1555.6 473.9 L1542.1 474.0 L1528.7 473.8 L1515.4 473.3 L1502.3 472.4 L1489.7 471.1 L1477.5 469.5 L1466.1 467.6 L1455.4 465.4 L1445.5 462.9 M1423.7 445.1 L1412.8 441.8 L1403.3 438.1 L1395.1 434.3 L1388.4 430.2 L1383.2 425.9 L1379.6 421.6 L1377.6 417.1 L1377.3 412.7 L1378.6 408.2 L1381.6 403.8 L1386.1 399.5 L1392.2 395.4 L1399.8 391.4 L1408.8 387.7 L1419.2 384.2 L1430.8 381.0 L1443.5 378.1 L1457.2 375.6 L1471.7 373.5 L1486.9 371.8 L1502.7 370.5 L1518.9 369.7 L1535.4 369.2 L1551.9 369.3 L1568.3 369.7 L1584.5 370.6 L1600.2 372.0 L1615.4 373.7 L1629.8 375.9 L1643.4 378.4 L1656.0 381.3 L1667.5 384.5 L1677.7 388.0 L1686.6 391.8 L1694.1 395.8 L1700.0 399.9 L1704.4 404.2 L1707.2 408.7 L1708.4 413.1 L1707.9 417.6 L1705.7 422.0 L1702.0 426.4 L1696.6 430.6 L1689.8 434.6 L1681.4 438.5 L1671.7 442.1 L1660.8 445.5 L1648.6 448.5 L1635.4 451.2 L1621.3 453.5 L1606.4 455.4 L1590.8 456.9 L1574.8 458.0 L1558.5 458.6 L1542.0 458.8 L1525.5 458.6 L1509.2 457.9 L1493.2 456.8 L1477.7 455.2 L1462.9 453.3 L1448.8 450.9 L1435.7 448.2 L1423.7 445.1 M1409.9 421.4 L1397.8 417.7 L1387.2 413.6 L1378.0 409.3 L1370.5 404.7 L1364.8 400.0 L1360.8 395.1 L1358.6 390.2 L1358.2 385.2 L1359.7 380.2 L1363.0 375.3 L1368.0 370.5 L1374.8 365.9 L1383.3 361.5 L1393.4 357.3 L1404.9 353.4 L1417.9 349.9 L1432.0 346.7 L1447.3 343.9 L1463.5 341.6 L1480.5 339.6 L1498.1 338.2 L1516.2 337.2 L1534.5 336.8 L1552.9 336.8 L1571.2 337.3 L1589.3 338.3 L1606.8 339.8 L1623.8 341.8 L1639.9 344.2 L1655.0 347.0 L1669.1 350.2 L1681.9 353.8 L1693.3 357.7 L1703.2 361.9 L1711.5 366.4 L1718.2 371.0 L1723.1 375.8 L1726.2 380.7 L1727.4 385.7 L1726.9 390.7 L1724.5 395.6 L1720.3 400.5 L1714.4 405.2 L1706.7 409.7 L1697.4 414.0 L1686.6 418.1 L1674.4 421.8 L1660.8 425.2 L1646.1 428.1 L1630.3 430.7 L1613.7 432.9 L1596.4 434.5 L1578.5 435.7 L1560.3 436.5 L1541.9 436.7 L1523.5 436.4 L1505.3 435.6 L1487.5 434.4 L1470.2 432.7 L1453.7 430.5 L1438.0 427.9 L1423.4 424.8 L1409.9 421.4 M1405.3 393.3 L1392.7 389.5 L1381.7 385.3 L1372.2 380.8 L1364.5 376.1 L1358.5 371.2 L1354.3 366.1 L1352.1 361.0 L1351.7 355.9 L1353.2 350.7 L1356.6 345.6 L1361.9 340.7 L1368.9 335.9 L1377.7 331.3 L1388.1 327.0 L1400.1 323.0 L1413.5 319.3 L1428.1 316.0 L1443.9 313.1 L1460.7 310.7 L1478.3 308.7 L1496.5 307.2 L1515.2 306.2 L1534.2 305.7 L1553.3 305.7 L1572.2 306.3 L1590.9 307.3 L1609.1 308.9 L1626.6 310.9 L1643.3 313.4 L1659.0 316.3 L1673.5 319.6 L1686.8 323.4 L1698.6 327.4 L1708.9 331.7 L1717.5 336.4 L1724.3 341.2 L1729.4 346.1 L1732.6 351.2 L1734.0 356.4 L1733.4 361.5 L1730.9 366.6 L1726.6 371.7 L1720.4 376.5 L1712.5 381.2 L1702.9 385.7 L1691.7 389.9 L1679.0 393.7 L1665.0 397.2 L1649.7 400.3 L1633.4 403.0 L1616.2 405.2 L1598.2 406.9 L1579.8 408.2 L1560.9 408.9 L1541.8 409.1 L1522.8 408.9 L1504.0 408.1 L1485.5 406.8 L1467.7 405.0 L1450.5 402.7 L1434.3 400.0 L1419.2 396.9 L1405.3 393.3 M1409.9 362.8 L1397.8 359.1 L1387.2 355.0 L1378.0 350.7 L1370.5 346.1 L1364.8 341.4 L1360.8 336.5 L1358.6 331.6 L1358.2 326.6 L1359.7 321.6 L1363.0 316.7 L1368.0 311.9 L1374.8 307.3 L1383.3 302.9 L1393.4 298.7 L1404.9 294.8 L1417.9 291.3 L1432.0 288.1 L1447.3 285.3 L1463.5 283.0 L1480.5 281.0 L1498.1 279.6 L1516.2 278.6 L1534.5 278.2 L1552.9 278.2 L1571.2 278.7 L1589.3 279.7 L1606.8 281.2 L1623.8 283.2 L1639.9 285.6 L1655.0 288.4 L1669.1 291.6 L1681.9 295.2 L1693.3 299.1 L1703.2 303.3 L1711.5 307.8 L1718.2 312.4 L1723.1 317.2 L1726.2 322.1 L1727.4 327.1 L1726.9 332.1 L1724.5 337.0 L1720.3 341.9 L1714.4 346.6 L1706.7 351.1 L1697.4 355.4 L1686.6 359.5 L1674.4 363.2 L1660.8 366.6 L1646.1 369.5 L1630.3 372.1 L1613.7 374.3 L1596.4 375.9 L1578.5 377.1 L1560.3 377.9 L1541.9 378.1 L1523.5 377.8 L1505.3 377.0 L1487.5 375.8 L1470.2 374.1 L1453.7 371.9 L1438.0 369.3 L1423.4 366.2 L1409.9 362.8 M1423.7 331.9 L1412.8 328.6 L1403.3 324.9 L1395.1 321.0 L1388.4 317.0 L1383.2 312.7 L1379.6 308.4 L1377.6 303.9 L1377.3 299.5 L1378.6 295.0 L1381.6 290.6 L1386.1 286.3 L1392.2 282.2 L1399.8 278.2 L1408.8 274.5 L1419.2 271.0 L1430.8 267.8 L1443.5 264.9 L1457.2 262.4 L1471.7 260.3 L1486.9 258.6 L1502.7 257.3 L1518.9 256.4 L1535.4 256.0 L1551.9 256.0 L1568.3 256.5 L1584.5 257.4 L1600.2 258.8 L1615.4 260.5 L1629.8 262.7 L1643.4 265.2 L1656.0 268.1 L1667.5 271.3 L1677.7 274.8 L1686.6 278.6 L1694.1 282.6 L1700.0 286.7 L1704.4 291.0 L1707.2 295.4 L1708.4 299.9 L1707.9 304.4 L1705.7 308.8 L1702.0 313.1 L1696.6 317.4 L1689.8 321.4 L1681.4 325.3 L1671.7 328.9 L1660.8 332.2 L1648.6 335.3 L1635.4 338.0 L1621.3 340.3 L1606.4 342.2 L1590.8 343.7 L1574.8 344.8 L1558.5 345.4 L1542.0 345.6 L1525.5 345.4 L1509.2 344.7 L1493.2 343.6 L1477.7 342.0 L1462.9 340.0 L1448.8 337.7 L1435.7 335.0 L1423.7 331.9 M1445.5 302.8 L1436.7 300.0 L1428.9 297.1 L1422.2 293.9 L1416.7 290.5 L1412.5 287.1 L1409.5 283.5 L1407.9 279.9 L1407.7 276.3 L1408.7 272.6 L1411.1 269.0 L1414.9 265.5 L1419.8 262.1 L1426.1 258.9 L1433.4 255.8 L1441.9 253.0 L1451.3 250.4 L1461.7 248.1 L1472.9 246.0 L1484.7 244.3 L1497.2 242.9 L1510.1 241.8 L1523.3 241.1 L1536.7 240.8 L1550.2 240.8 L1563.6 241.2 L1576.8 241.9 L1589.7 243.0 L1602.1 244.5 L1613.9 246.2 L1625.0 248.3 L1635.3 250.7 L1644.6 253.3 L1653.0 256.1 L1660.2 259.2 L1666.3 262.5 L1671.2 265.9 L1674.8 269.4 L1677.0 273.0 L1678.0 276.6 L1677.6 280.3 L1675.8 283.9 L1672.8 287.4 L1668.4 290.9 L1662.8 294.2 L1656.0 297.4 L1648.1 300.3 L1639.1 303.0 L1629.2 305.5 L1618.4 307.7 L1606.9 309.6 L1594.7 311.1 L1582.0 312.4 L1568.9 313.3 L1555.6 313.8 L1542.1 313.9 L1528.7 313.7 L1515.4 313.2 L1502.3 312.3 L1489.7 311.0 L1477.5 309.4 L1466.1 307.5 L1455.4 305.3 L1445.5 302.8 M1474.0 277.3 L1467.8 275.4 L1462.2 273.3 L1457.5 271.0 L1453.6 268.7 L1450.6 266.2 L1448.6 263.7 L1447.4 261.2 L1447.2 258.6 L1448.0 256.0 L1449.7 253.5 L1452.3 251.0 L1455.9 248.6 L1460.2 246.3 L1465.5 244.2 L1471.4 242.1 L1478.1 240.3 L1485.5 238.7 L1493.4 237.2 L1501.8 236.0 L1510.6 235.0 L1519.7 234.3 L1529.0 233.8 L1538.5 233.5 L1548.0 233.5 L1557.5 233.8 L1566.9 234.3 L1575.9 235.1 L1584.7 236.1 L1593.1 237.3 L1600.9 238.8 L1608.2 240.5 L1614.8 242.3 L1620.7 244.4 L1625.8 246.5 L1630.1 248.8 L1633.6 251.2 L1636.1 253.7 L1637.7 256.3 L1638.4 258.8 L1638.1 261.4 L1636.9 264.0 L1634.7 266.5 L1631.6 268.9 L1627.7 271.3 L1622.8 273.5 L1617.2 275.6 L1610.9 277.5 L1603.9 279.3 L1596.3 280.8 L1588.1 282.1 L1579.5 283.3 L1570.5 284.1 L1561.3 284.7 L1551.8 285.1 L1542.3 285.2 L1532.8 285.1 L1523.4 284.7 L1514.2 284.0 L1505.2 283.2 L1496.7 282.0 L1488.6 280.7 L1481.0 279.1 L1474.0 277.3 M1507.2 257.4 L1504.0 256.3 L1501.1 255.3 L1498.7 254.1 L1496.6 252.9 L1495.1 251.6 L1494.0 250.3 L1493.4 249.0 L1493.3 247.6 L1493.7 246.3 L1494.6 245.0 L1496.0 243.7 L1497.8 242.5 L1500.1 241.3 L1502.8 240.2 L1505.9 239.1 L1509.3 238.2 L1513.1 237.3 L1517.2 236.6 L1521.6 236.0 L1526.1 235.4 L1530.8 235.1 L1535.7 234.8 L1540.6 234.7 L1545.5 234.7 L1550.4 234.8 L1555.3 235.1 L1560.0 235.5 L1564.5 236.0 L1568.8 236.7 L1572.9 237.4 L1576.6 238.3 L1580.1 239.2 L1583.1 240.3 L1585.8 241.4 L1588.0 242.6 L1589.8 243.8 L1591.1 245.1 L1591.9 246.5 L1592.3 247.8 L1592.1 249.1 L1591.5 250.4 L1590.4 251.7 L1588.8 253.0 L1586.7 254.2 L1584.2 255.4 L1581.3 256.5 L1578.1 257.4 L1574.4 258.4 L1570.5 259.2 L1566.2 259.8 L1561.8 260.4 L1557.2 260.9 L1552.4 261.2 L1547.5 261.4 L1542.6 261.4 L1537.6 261.4 L1532.8 261.2 L1528.0 260.8 L1523.4 260.4 L1518.9 259.8 L1514.7 259.1 L1510.8 258.3 L1507.2 257.4 M1542.8 470.6 L1535.9 472.3 L1529.1 473.6 L1522.3 474.7 L1515.5 475.5 L1508.9 476.0 L1502.3 476.2 L1495.8 476.1 L1489.4 475.7 L1483.1 475.0 L1477.0 474.0 L1471.1 472.7 L1465.3 471.2 L1459.8 469.3 L1454.4 467.2 L1449.3 464.8 L1444.3 462.2 L1439.7 459.3 L1435.3 456.1 L1431.1 452.7 L1427.3 449.0 L1423.7 445.1 L1420.4 441.0 L1417.4 436.7 L1414.8 432.2 L1412.4 427.5 L1410.4 422.7 L1408.7 417.6 L1407.4 412.5 L1406.3 407.1 L1405.6 401.7 L1405.3 396.2 L1405.3 390.5 L1405.6 384.8 L1406.3 379.0 L1407.4 373.1 L1408.7 367.3 L1410.4 361.3 L1412.4 355.4 L1414.8 349.5 L1417.4 343.6 L1420.4 337.7 L1423.7 331.9 L1427.3 326.2 L1431.1 320.5 L1435.3 314.9 L1439.7 309.4 L1444.3 304.1 L1449.3 298.9 L1454.4 293.8 L1459.8 288.9 L1465.3 284.1 L1471.1 279.5 L1477.0 275.2 L1483.1 271.0 L1489.4 267.0 L1495.8 263.3 L1502.3 259.8 L1508.9 256.6 L1515.5 253.6 L1522.3 250.8 L1529.1 248.3 L1535.9 246.1 L1542.8 244.2 M1542.8 470.6 L1533.6 471.1 L1524.3 471.3 L1515.1 471.2 L1506.0 470.8 L1497.0 470.2 L1488.1 469.3 L1479.3 468.1 L1470.7 466.6 L1462.3 464.8 L1454.1 462.8 L1446.1 460.5 L1438.3 458.0 L1430.8 455.2 L1423.5 452.2 L1416.6 448.9 L1410.0 445.4 L1403.7 441.7 L1397.8 437.8 L1392.2 433.6 L1387.0 429.3 L1382.1 424.8 L1377.7 420.2 L1373.7 415.4 L1370.1 410.4 L1366.9 405.3 L1364.2 400.1 L1361.9 394.8 L1360.1 389.4 L1358.7 383.9 L1357.8 378.3 L1357.3 372.7 L1357.3 367.1 L1357.8 361.4 L1358.7 355.7 L1360.1 350.1 L1361.9 344.4 L1364.2 338.8 L1366.9 333.2 L1370.1 327.7 L1373.7 322.3 L1377.7 316.9 L1382.1 311.6 L1387.0 306.5 L1392.2 301.5 L1397.8 296.6 L1403.7 291.9 L1410.0 287.3 L1416.6 282.9 L1423.5 278.7 L1430.8 274.7 L1438.3 270.9 L1446.1 267.3 L1454.1 264.0 L1462.3 260.8 L1470.7 257.9 L1479.3 255.3 L1488.1 252.9 L1497.0 250.8 L1506.0 248.9 L1515.1 247.3 L1524.3 246.0 L1533.6 245.0 L1542.8 244.2 M1542.8 470.6 L1533.6 469.8 L1524.5 468.6 L1515.4 467.2 L1506.4 465.5 L1497.4 463.6 L1488.6 461.4 L1479.9 458.9 L1471.4 456.2 L1463.1 453.2 L1454.9 450.0 L1447.0 446.6 L1439.3 442.9 L1431.8 439.0 L1424.7 435.0 L1417.8 430.7 L1411.2 426.2 L1405.0 421.6 L1399.1 416.8 L1393.6 411.9 L1388.4 406.8 L1383.6 401.7 L1379.2 396.4 L1375.3 391.0 L1371.7 385.5 L1368.6 379.9 L1365.9 374.3 L1363.6 368.7 L1361.8 363.0 L1360.4 357.3 L1359.5 351.6 L1359.1 346.0 L1359.1 340.3 L1359.5 334.7 L1360.4 329.2 L1361.8 323.7 L1363.6 318.3 L1365.9 313.0 L1368.6 307.8 L1371.7 302.8 L1375.3 297.8 L1379.2 293.1 L1383.6 288.4 L1388.4 284.0 L1393.6 279.7 L1399.1 275.7 L1405.0 271.8 L1411.2 268.1 L1417.8 264.7 L1424.7 261.5 L1431.8 258.5 L1439.3 255.8 L1447.0 253.4 L1454.9 251.2 L1463.1 249.2 L1471.4 247.5 L1479.9 246.1 L1488.6 245.0 L1497.4 244.2 L1506.4 243.6 L1515.4 243.3 L1524.5 243.3 L1533.6 243.6 L1542.8 244.2 M1542.8 470.6 L1536.2 468.6 L1529.6 466.3 L1523.0 463.8 L1516.5 461.0 L1510.0 457.9 L1503.7 454.6 L1497.4 451.0 L1491.2 447.3 L1485.2 443.2 L1479.3 439.0 L1473.5 434.6 L1468.0 430.0 L1462.6 425.2 L1457.4 420.2 L1452.5 415.1 L1447.7 409.8 L1443.2 404.4 L1439.0 398.9 L1435.0 393.3 L1431.2 387.5 L1427.8 381.8 L1424.6 375.9 L1421.7 370.0 L1419.2 364.1 L1416.9 358.2 L1414.9 352.2 L1413.3 346.3 L1412.0 340.4 L1411.0 334.5 L1410.4 328.7 L1410.0 323.0 L1410.0 317.4 L1410.4 311.8 L1411.0 306.4 L1412.0 301.1 L1413.3 295.9 L1414.9 290.9 L1416.9 286.1 L1419.2 281.4 L1421.7 276.9 L1424.6 272.6 L1427.8 268.6 L1431.2 264.7 L1435.0 261.1 L1439.0 257.7 L1443.2 254.6 L1447.7 251.7 L1452.5 249.1 L1457.4 246.7 L1462.6 244.7 L1468.0 242.9 L1473.5 241.4 L1479.3 240.2 L1485.2 239.3 L1491.2 238.6 L1497.4 238.3 L1503.7 238.2 L1510.0 238.5 L1516.5 239.1 L1523.0 239.9 L1529.6 241.0 L1536.2 242.5 L1542.8 244.2 M1542.8 470.6 L1540.5 468.0 L1538.2 465.0 L1535.9 461.9 L1533.6 458.4 L1531.4 454.7 L1529.2 450.8 L1527.0 446.6 L1524.8 442.2 L1522.7 437.6 L1520.7 432.8 L1518.7 427.8 L1516.7 422.7 L1514.9 417.3 L1513.1 411.8 L1511.3 406.2 L1509.7 400.5 L1508.1 394.7 L1506.6 388.7 L1505.2 382.7 L1503.9 376.6 L1502.7 370.5 L1501.6 364.4 L1500.6 358.2 L1499.7 352.0 L1499.0 345.9 L1498.3 339.7 L1497.7 333.6 L1497.2 327.6 L1496.9 321.7 L1496.7 315.8 L1496.6 310.0 L1496.6 304.4 L1496.7 298.9 L1496.9 293.5 L1497.2 288.3 L1497.7 283.3 L1498.3 278.4 L1499.0 273.7 L1499.7 269.3 L1500.6 265.1 L1501.6 261.1 L1502.7 257.3 L1503.9 253.8 L1505.2 250.5 L1506.6 247.6 L1508.1 244.8 L1509.7 242.4 L1511.3 240.3 L1513.1 238.4 L1514.9 236.8 L1516.7 235.6 L1518.7 234.6 L1520.7 234.0 L1522.7 233.6 L1524.8 233.6 L1527.0 233.8 L1529.2 234.4 L1531.4 235.3 L1533.6 236.5 L1535.9 238.0 L1538.2 239.8 L1540.5 241.8 L1542.8 244.2 M1542.8 470.6 L1545.4 468.0 L1548.0 465.1 L1550.7 461.9 L1553.2 458.5 L1555.8 454.8 L1558.3 450.9 L1560.8 446.8 L1563.3 442.4 L1565.7 437.8 L1568.0 433.0 L1570.3 428.1 L1572.5 422.9 L1574.6 417.6 L1576.7 412.1 L1578.6 406.6 L1580.5 400.8 L1582.3 395.0 L1584.0 389.1 L1585.6 383.1 L1587.1 377.0 L1588.4 370.9 L1589.7 364.8 L1590.8 358.6 L1591.9 352.5 L1592.8 346.3 L1593.5 340.2 L1594.2 334.1 L1594.7 328.1 L1595.1 322.1 L1595.4 316.3 L1595.5 310.5 L1595.5 304.8 L1595.4 299.3 L1595.1 294.0 L1594.7 288.8 L1594.2 283.7 L1593.5 278.9 L1592.8 274.2 L1591.9 269.7 L1590.8 265.5 L1589.7 261.5 L1588.4 257.7 L1587.1 254.2 L1585.6 250.9 L1584.0 247.9 L1582.3 245.2 L1580.5 242.7 L1578.6 240.6 L1576.7 238.7 L1574.6 237.1 L1572.5 235.8 L1570.3 234.9 L1568.0 234.2 L1565.7 233.8 L1563.3 233.8 L1560.8 234.0 L1558.3 234.6 L1555.8 235.4 L1553.2 236.6 L1550.7 238.0 L1548.0 239.8 L1545.4 241.9 L1542.8 244.2 M1542.8 470.6 L1549.7 468.7 L1556.5 466.5 L1563.3 464.0 L1570.1 461.2 L1576.7 458.2 L1583.3 455.0 L1589.8 451.5 L1596.2 447.8 L1602.5 443.8 L1608.6 439.6 L1614.5 435.3 L1620.3 430.7 L1625.8 425.9 L1631.2 421.0 L1636.3 415.9 L1641.3 410.7 L1645.9 405.4 L1650.3 399.9 L1654.5 394.3 L1658.3 388.6 L1661.9 382.9 L1665.2 377.1 L1668.2 371.2 L1670.8 365.3 L1673.2 359.4 L1675.2 353.5 L1676.9 347.5 L1678.2 341.7 L1679.3 335.8 L1680.0 330.0 L1680.3 324.3 L1680.3 318.6 L1680.0 313.1 L1679.3 307.7 L1678.2 302.3 L1676.9 297.2 L1675.2 292.1 L1673.2 287.3 L1670.8 282.6 L1668.2 278.1 L1665.2 273.8 L1661.9 269.7 L1658.3 265.8 L1654.5 262.1 L1650.3 258.7 L1645.9 255.5 L1641.3 252.6 L1636.3 250.0 L1631.2 247.6 L1625.8 245.5 L1620.3 243.6 L1614.5 242.1 L1608.6 240.8 L1602.5 239.8 L1596.2 239.1 L1589.8 238.7 L1583.3 238.6 L1576.7 238.8 L1570.1 239.3 L1563.3 240.1 L1556.5 241.2 L1549.7 242.5 L1542.8 244.2 M1542.8 470.6 L1552.0 469.8 L1561.3 468.8 L1570.5 467.5 L1579.6 465.9 L1588.6 464.0 L1597.5 461.9 L1606.3 459.5 L1614.9 456.9 L1623.3 454.0 L1631.5 450.8 L1639.5 447.5 L1647.3 443.9 L1654.8 440.1 L1662.1 436.1 L1669.0 431.9 L1675.6 427.5 L1681.9 422.9 L1687.8 418.2 L1693.4 413.3 L1698.6 408.3 L1703.5 403.2 L1707.9 397.9 L1711.9 392.5 L1715.5 387.1 L1718.7 381.6 L1721.4 376.0 L1723.7 370.4 L1725.5 364.7 L1726.9 359.1 L1727.8 353.4 L1728.3 347.7 L1728.3 342.1 L1727.8 336.5 L1726.9 330.9 L1725.5 325.4 L1723.7 320.0 L1721.4 314.7 L1718.7 309.5 L1715.5 304.4 L1711.9 299.4 L1707.9 294.6 L1703.5 290.0 L1698.6 285.5 L1693.4 281.2 L1687.8 277.0 L1681.9 273.1 L1675.6 269.4 L1669.0 265.9 L1662.1 262.6 L1654.8 259.6 L1647.3 256.8 L1639.5 254.3 L1631.5 252.0 L1623.3 250.0 L1614.9 248.2 L1606.3 246.7 L1597.5 245.5 L1588.6 244.6 L1579.6 244.0 L1570.5 243.6 L1561.3 243.5 L1552.0 243.7 L1542.8 244.2 M1542.8 470.6 L1552.0 471.2 L1561.1 471.5 L1570.2 471.5 L1579.2 471.2 L1588.2 470.6 L1597.0 469.8 L1605.7 468.7 L1614.2 467.3 L1622.5 465.6 L1630.7 463.6 L1638.6 461.4 L1646.3 459.0 L1653.8 456.3 L1660.9 453.3 L1667.8 450.1 L1674.4 446.7 L1680.6 443.0 L1686.5 439.1 L1692.0 435.1 L1697.2 430.8 L1702.0 426.4 L1706.4 421.7 L1710.3 417.0 L1713.9 412.0 L1717.0 407.0 L1719.7 401.8 L1722.0 396.5 L1723.8 391.1 L1725.2 385.6 L1726.1 380.1 L1726.5 374.5 L1726.5 368.8 L1726.1 363.2 L1725.2 357.5 L1723.8 351.8 L1722.0 346.1 L1719.7 340.5 L1717.0 334.9 L1713.9 329.3 L1710.3 323.8 L1706.4 318.4 L1702.0 313.1 L1697.2 308.0 L1692.0 302.9 L1686.5 298.0 L1680.6 293.2 L1674.4 288.6 L1667.8 284.1 L1660.9 279.8 L1653.8 275.8 L1646.3 271.9 L1638.6 268.2 L1630.7 264.8 L1622.5 261.6 L1614.2 258.6 L1605.7 255.9 L1597.0 253.4 L1588.2 251.2 L1579.2 249.3 L1570.2 247.6 L1561.1 246.2 L1552.0 245.0 L1542.8 244.2 M1542.8 470.6 L1549.4 472.3 L1556.0 473.8 L1562.6 474.9 L1569.1 475.7 L1575.6 476.3 L1581.9 476.6 L1588.2 476.5 L1594.4 476.2 L1600.4 475.5 L1606.3 474.6 L1612.1 473.4 L1617.6 471.9 L1623.0 470.1 L1628.2 468.1 L1633.1 465.7 L1637.9 463.1 L1642.4 460.2 L1646.6 457.1 L1650.6 453.7 L1654.4 450.1 L1657.8 446.2 L1661.0 442.2 L1663.9 437.9 L1666.4 433.4 L1668.7 428.7 L1670.7 423.9 L1672.3 418.9 L1673.6 413.7 L1674.6 408.4 L1675.2 403.0 L1675.6 397.4 L1675.6 391.8 L1675.2 386.1 L1674.6 380.3 L1673.6 374.4 L1672.3 368.5 L1670.7 362.6 L1668.7 356.6 L1666.4 350.7 L1663.9 344.8 L1661.0 338.9 L1657.8 333.0 L1654.4 327.3 L1650.6 321.5 L1646.6 315.9 L1642.4 310.4 L1637.9 305.0 L1633.1 299.7 L1628.2 294.6 L1623.0 289.6 L1617.6 284.8 L1612.1 280.2 L1606.3 275.8 L1600.4 271.6 L1594.4 267.5 L1588.2 263.8 L1581.9 260.2 L1575.6 256.9 L1569.1 253.8 L1562.6 251.0 L1556.0 248.5 L1549.4 246.2 L1542.8 244.2 M1542.8 470.6 L1545.1 473.0 L1547.4 475.0 L1549.7 476.8 L1552.0 478.3 L1554.2 479.5 L1556.4 480.4 L1558.6 481.0 L1560.8 481.2 L1562.9 481.2 L1564.9 480.8 L1566.9 480.2 L1568.9 479.2 L1570.7 478.0 L1572.5 476.4 L1574.3 474.5 L1575.9 472.4 L1577.5 470.0 L1579.0 467.2 L1580.4 464.3 L1581.7 461.0 L1582.9 457.5 L1584.0 453.7 L1585.0 449.7 L1585.9 445.5 L1586.6 441.1 L1587.3 436.4 L1587.9 431.5 L1588.4 426.5 L1588.7 421.3 L1588.9 415.9 L1589.0 410.4 L1589.0 404.8 L1588.9 399.0 L1588.7 393.1 L1588.4 387.2 L1587.9 381.2 L1587.3 375.1 L1586.6 368.9 L1585.9 362.8 L1585.0 356.6 L1584.0 350.4 L1582.9 344.3 L1581.7 338.2 L1580.4 332.1 L1579.0 326.1 L1577.5 320.1 L1575.9 314.3 L1574.3 308.6 L1572.5 303.0 L1570.7 297.5 L1568.9 292.1 L1566.9 287.0 L1564.9 282.0 L1562.9 277.2 L1560.8 272.6 L1558.6 268.2 L1556.4 264.0 L1554.2 260.1 L1552.0 256.4 L1549.7 252.9 L1547.4 249.8 L1545.1 246.8 L1542.8 244.2 M1542.8 470.6 L1540.2 472.9 L1537.6 475.0 L1534.9 476.8 L1532.4 478.2 L1529.8 479.4 L1527.3 480.2 L1524.8 480.8 L1522.3 481.0 L1519.9 481.0 L1517.6 480.6 L1515.3 479.9 L1513.1 479.0 L1511.0 477.7 L1508.9 476.1 L1507.0 474.2 L1505.1 472.1 L1503.3 469.6 L1501.6 466.9 L1500.0 463.9 L1498.5 460.6 L1497.2 457.1 L1495.9 453.3 L1494.8 449.3 L1493.7 445.1 L1492.8 440.6 L1492.1 435.9 L1491.4 431.1 L1490.9 426.0 L1490.5 420.8 L1490.2 415.5 L1490.1 410.0 L1490.1 404.3 L1490.2 398.5 L1490.5 392.7 L1490.9 386.7 L1491.4 380.7 L1492.1 374.6 L1492.8 368.5 L1493.7 362.3 L1494.8 356.2 L1495.9 350.0 L1497.2 343.9 L1498.5 337.8 L1500.0 331.7 L1501.6 325.7 L1503.3 319.8 L1505.1 314.0 L1507.0 308.2 L1508.9 302.7 L1511.0 297.2 L1513.1 291.9 L1515.3 286.7 L1517.6 281.8 L1519.9 277.0 L1522.3 272.4 L1524.8 268.0 L1527.3 263.9 L1529.8 260.0 L1532.4 256.3 L1534.9 252.9 L1537.6 249.7 L1540.2 246.8 L1542.8 244.2" stroke="#EBDA48" stroke-width="1.05" fill="none"/></svg>
<div class="a" style="left:0px;top:470px;width:600px;height:1px;background:#D4D4D4;"></div>
<div class="a" style="left:0px;top:471px;width:600px;height:27px;background:#F0F0F0;"></div>
<div class="t" style="left:2px;top:475.5px;font-size:15px;line-height:20px;color:#000000;font-weight:normal;font-family:'Liberation Sans',sans-serif;letter-spacing:0.3px;white-space:pre;">view:  60.0000,  136.000   scale:  1.22000,  1.26000</div>
<svg class="a" style="left:586px;top:485px;" width="12" height="12" viewBox="0 0 12 12"><rect x="9.4" y="1.3" width="2.5" height="2.5" fill="#B8B8B8"/><rect x="5.3" y="5.5" width="2.5" height="2.5" fill="#B8B8B8"/><rect x="9.4" y="5.5" width="2.5" height="2.5" fill="#B8B8B8"/><rect x="1.3" y="9.3" width="2.5" height="2.5" fill="#B8B8B8"/><rect x="5.3" y="9.3" width="2.5" height="2.5" fill="#B8B8B8"/><rect x="9.4" y="9.3" width="2.5" height="2.5" fill="#B8B8B8"/></svg>
</div>
</body></html>
